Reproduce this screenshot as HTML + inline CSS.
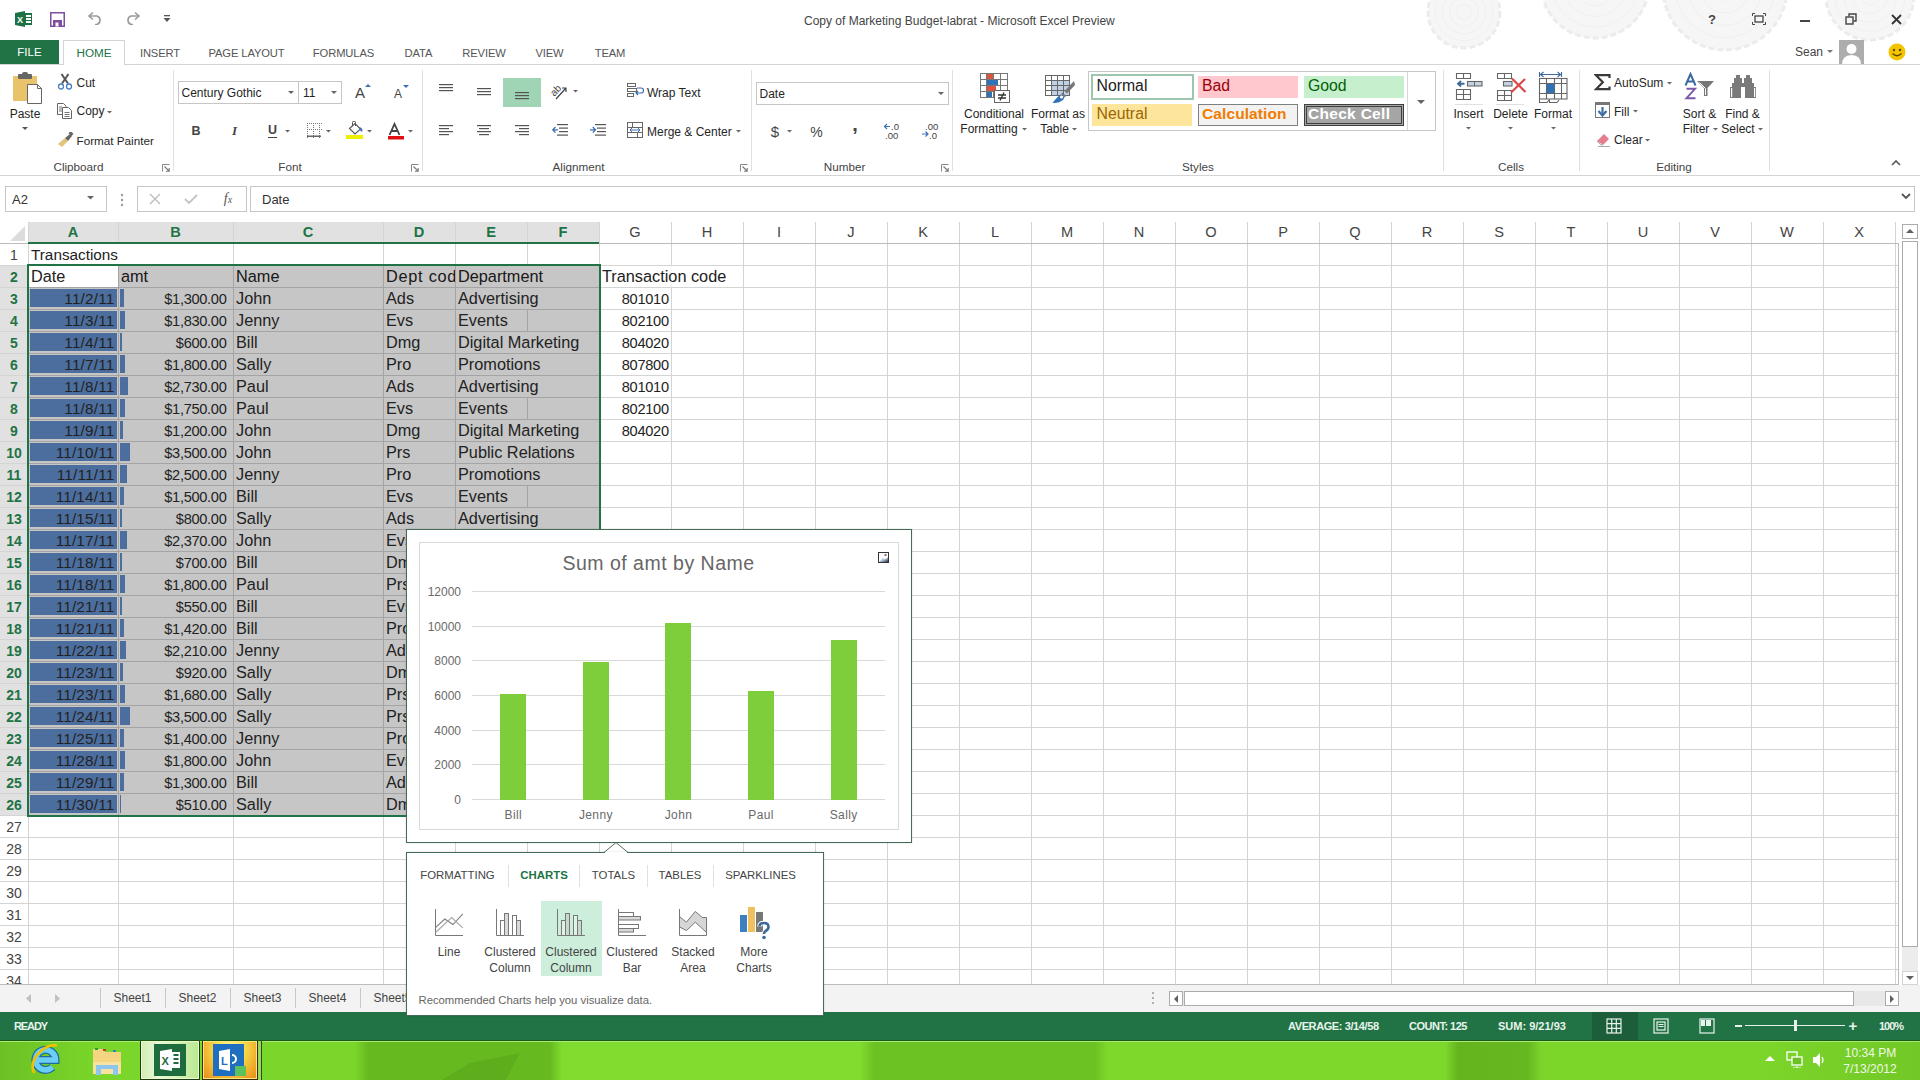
<!DOCTYPE html>
<html><head><meta charset="utf-8"><title>Excel</title>
<style>
html,body{margin:0;padding:0;}
body{width:1920px;height:1080px;overflow:hidden;position:relative;background:#fff;font-family:"Liberation Sans",sans-serif;}
body div, body svg{position:absolute;}
.t{white-space:nowrap;}
</style></head><body>
<svg style="left:1400px;top:0px;" width="520" height="64" viewBox="0 0 520 64"><circle cx="64" cy="12" r="36" fill="#f6f6f6" stroke="#ececec" stroke-width="3" stroke-dasharray="6 3"/><circle cx="64" cy="12" r="7.2" fill="none" stroke="#f0f0f0" stroke-width="1"/><circle cx="64" cy="12" r="14.4" fill="none" stroke="#f0f0f0" stroke-width="1"/><circle cx="64" cy="12" r="21.6" fill="none" stroke="#f0f0f0" stroke-width="1"/><circle cx="64" cy="12" r="28.8" fill="none" stroke="#f0f0f0" stroke-width="1"/><circle cx="195" cy="-16" r="54" fill="#f6f6f6" stroke="#ececec" stroke-width="3" stroke-dasharray="6 3"/><circle cx="195" cy="-16" r="10.8" fill="none" stroke="#f0f0f0" stroke-width="1"/><circle cx="195" cy="-16" r="21.6" fill="none" stroke="#f0f0f0" stroke-width="1"/><circle cx="195" cy="-16" r="32.4" fill="none" stroke="#f0f0f0" stroke-width="1"/><circle cx="195" cy="-16" r="43.2" fill="none" stroke="#f0f0f0" stroke-width="1"/><circle cx="325" cy="-12" r="62" fill="#f6f6f6" stroke="#ececec" stroke-width="3" stroke-dasharray="6 3"/><circle cx="325" cy="-12" r="12.4" fill="none" stroke="#f0f0f0" stroke-width="1"/><circle cx="325" cy="-12" r="24.8" fill="none" stroke="#f0f0f0" stroke-width="1"/><circle cx="325" cy="-12" r="37.2" fill="none" stroke="#f0f0f0" stroke-width="1"/><circle cx="325" cy="-12" r="49.6" fill="none" stroke="#f0f0f0" stroke-width="1"/><circle cx="470" cy="-4" r="44" fill="#f6f6f6" stroke="#ececec" stroke-width="3" stroke-dasharray="6 3"/><circle cx="470" cy="-4" r="8.8" fill="none" stroke="#f0f0f0" stroke-width="1"/><circle cx="470" cy="-4" r="17.6" fill="none" stroke="#f0f0f0" stroke-width="1"/><circle cx="470" cy="-4" r="26.4" fill="none" stroke="#f0f0f0" stroke-width="1"/><circle cx="470" cy="-4" r="35.2" fill="none" stroke="#f0f0f0" stroke-width="1"/></svg><svg style="left:14px;top:10px;" width="19" height="18" viewBox="0 0 19 18"><path d="M1 3 L11 1 L11 17 L1 15 Z" fill="#1e7145"/><rect x="10" y="3" width="8" height="12" fill="#1e7145"/><rect x="12" y="5" width="5" height="2" fill="#fff"/><rect x="12" y="8" width="5" height="2" fill="#fff"/><rect x="12" y="11" width="5" height="2" fill="#fff"/><text x="3" y="12.5" font-family="Liberation Sans" font-weight="700" font-size="9" fill="#fff">X</text></svg><svg style="left:50px;top:12px;" width="15" height="15" viewBox="0 0 15 15"><path d="M0.75 0.75 H14.25 V14.25 H0.75 Z" fill="none" stroke="#7d4f9e" stroke-width="1.5"/><rect x="3" y="8" width="9" height="7" fill="#7d4f9e"/><rect x="5.5" y="10.5" width="3" height="4" fill="#fff"/></svg><svg style="left:87px;top:11px;" width="16" height="14" viewBox="0 0 16 14"><path d="M3 5 H10 A4.5 4.5 0 0 1 10 13.5 H8" fill="none" stroke="#9a9a9a" stroke-width="1.6"/><path d="M6 1.5 L2 5 L6 8.5" fill="none" stroke="#9a9a9a" stroke-width="1.6"/></svg><svg style="left:125px;top:11px;" width="16" height="14" viewBox="0 0 16 14"><path d="M13 5 H6 A4.5 4.5 0 0 0 6 13.5 H8" fill="none" stroke="#9a9a9a" stroke-width="1.6"/><path d="M10 1.5 L14 5 L10 8.5" fill="none" stroke="#9a9a9a" stroke-width="1.6"/></svg><svg style="left:163px;top:15px;" width="9" height="8" viewBox="0 0 9 8"><rect x="1" y="0" width="6" height="1.3" fill="#555"/><path d="M0.5 3 L7.5 3 L4 7 Z" fill="#555"/></svg><div class="t" style="left:804px;top:14.84px;font-size:12px;line-height:12px;color:#444;font-weight:400;">Copy of Marketing Budget-labrat - Microsoft Excel Preview</div><div class="t" style="left:1702.0px;width:20px;top:13.0px;font-size:13px;line-height:13px;color:#444;font-weight:700;text-align:center;">?</div><svg style="left:1752px;top:13px;" width="14" height="12" viewBox="0 0 14 12"><rect x="3" y="3" width="8" height="6" fill="none" stroke="#444" stroke-width="1.3"/><path d="M0.5 3 V0.5 H3 M11 0.5 H13.5 V3 M13.5 9 V11.5 H11 M3 11.5 H0.5 V9" fill="none" stroke="#444" stroke-width="1"/></svg><div style="left:1800px;top:20px;width:10px;height:2px;background:#444"></div><svg style="left:1845px;top:13px;" width="12" height="12" viewBox="0 0 12 12"><rect x="1" y="4" width="7" height="7" fill="none" stroke="#444" stroke-width="1.4"/><path d="M4 3.5 V1 H11 V8 H8.5" fill="none" stroke="#444" stroke-width="1.4"/></svg><svg style="left:1891px;top:14px;" width="11" height="11" viewBox="0 0 11 11"><path d="M1 1 L10 10 M10 1 L1 10" stroke="#333" stroke-width="1.8"/></svg><div style="left:0px;top:40px;width:59px;height:25px;background:#217346"></div><div class="t" style="left:0.0px;width:59px;top:47.27px;font-size:11.5px;line-height:11.5px;color:#fff;font-weight:400;text-align:center;">FILE</div><div style="left:63px;top:40px;width:62px;height:25px;background:#fff;border:1px solid #d4d4d4;border-bottom:none;box-sizing:border-box"></div><div class="t" style="left:63.0px;width:62px;top:47.1px;font-size:11.7px;line-height:11.7px;color:#217346;font-weight:400;text-align:center;">HOME</div><div class="t" style="left:100.0px;width:120px;top:47.52px;font-size:11.2px;line-height:11.2px;color:#555;font-weight:400;text-align:center;letter-spacing:-0.1px">INSERT</div><div class="t" style="left:186.5px;width:120px;top:47.52px;font-size:11.2px;line-height:11.2px;color:#555;font-weight:400;text-align:center;letter-spacing:-0.1px">PAGE LAYOUT</div><div class="t" style="left:283.5px;width:120px;top:47.52px;font-size:11.2px;line-height:11.2px;color:#555;font-weight:400;text-align:center;letter-spacing:-0.1px">FORMULAS</div><div class="t" style="left:358.5px;width:120px;top:47.52px;font-size:11.2px;line-height:11.2px;color:#555;font-weight:400;text-align:center;letter-spacing:-0.1px">DATA</div><div class="t" style="left:424.0px;width:120px;top:47.52px;font-size:11.2px;line-height:11.2px;color:#555;font-weight:400;text-align:center;letter-spacing:-0.1px">REVIEW</div><div class="t" style="left:489.5px;width:120px;top:47.52px;font-size:11.2px;line-height:11.2px;color:#555;font-weight:400;text-align:center;letter-spacing:-0.1px">VIEW</div><div class="t" style="left:550.0px;width:120px;top:47.52px;font-size:11.2px;line-height:11.2px;color:#555;font-weight:400;text-align:center;letter-spacing:-0.1px">TEAM</div><div class="t" style="left:1795px;top:45.84px;font-size:12px;line-height:12px;color:#444;font-weight:400;">Sean</div><svg style="left:1827px;top:50px;" width="6" height="4" viewBox="0 0 6 4"><path d="M0 0 L6 0 L3 3 Z" fill="#777"/></svg><svg style="left:1839px;top:40px;" width="25" height="25" viewBox="0 0 25 25"><rect width="25" height="25" fill="#adadad"/><circle cx="12.5" cy="9" r="5" fill="#fff"/><path d="M3 25 Q3 15 12.5 15 Q22 15 22 25 Z" fill="#fff"/></svg><svg style="left:1888px;top:43px;" width="18" height="18" viewBox="0 0 18 18"><circle cx="9" cy="9" r="8.5" fill="#f5c400"/><circle cx="6" cy="7" r="1.2" fill="#5a4a00"/><circle cx="12" cy="7" r="1.2" fill="#5a4a00"/><path d="M4.5 10.5 Q9 15 13.5 10.5" fill="none" stroke="#5a4a00" stroke-width="1.3"/></svg><div style="left:0px;top:64px;width:63px;height:1px;background:#d4d4d4"></div><div style="left:125px;top:64px;width:1795px;height:1px;background:#d4d4d4"></div><div class="t" style="left:18.5px;width:120px;top:161.1px;font-size:11.7px;line-height:11.7px;color:#444;font-weight:400;text-align:center;">Clipboard</div><div class="t" style="left:230.0px;width:120px;top:161.1px;font-size:11.7px;line-height:11.7px;color:#444;font-weight:400;text-align:center;">Font</div><div class="t" style="left:518.5px;width:120px;top:161.1px;font-size:11.7px;line-height:11.7px;color:#444;font-weight:400;text-align:center;">Alignment</div><div class="t" style="left:784.5px;width:120px;top:161.1px;font-size:11.7px;line-height:11.7px;color:#444;font-weight:400;text-align:center;">Number</div><div class="t" style="left:1138.0px;width:120px;top:161.1px;font-size:11.7px;line-height:11.7px;color:#444;font-weight:400;text-align:center;">Styles</div><div class="t" style="left:1451.0px;width:120px;top:161.1px;font-size:11.7px;line-height:11.7px;color:#444;font-weight:400;text-align:center;">Cells</div><div class="t" style="left:1614.0px;width:120px;top:161.1px;font-size:11.7px;line-height:11.7px;color:#444;font-weight:400;text-align:center;">Editing</div><div style="left:173px;top:70px;width:1px;height:101px;background:#e1e1e1"></div><div style="left:422px;top:70px;width:1px;height:101px;background:#e1e1e1"></div><div style="left:751px;top:70px;width:1px;height:101px;background:#e1e1e1"></div><div style="left:952px;top:70px;width:1px;height:101px;background:#e1e1e1"></div><div style="left:1443px;top:70px;width:1px;height:101px;background:#e1e1e1"></div><div style="left:1579px;top:70px;width:1px;height:101px;background:#e1e1e1"></div><div style="left:1769px;top:70px;width:1px;height:101px;background:#e1e1e1"></div><svg style="left:162px;top:164px;" width="8" height="8" viewBox="0 0 8 8"><path d="M0.5 7.5 V0.5 H7.5" fill="none" stroke="#888" stroke-width="1"/><path d="M2.5 2.5 L7 7 M4 7.2 H7.2 V4" fill="none" stroke="#777" stroke-width="1.1"/></svg><svg style="left:411px;top:164px;" width="8" height="8" viewBox="0 0 8 8"><path d="M0.5 7.5 V0.5 H7.5" fill="none" stroke="#888" stroke-width="1"/><path d="M2.5 2.5 L7 7 M4 7.2 H7.2 V4" fill="none" stroke="#777" stroke-width="1.1"/></svg><svg style="left:740px;top:164px;" width="8" height="8" viewBox="0 0 8 8"><path d="M0.5 7.5 V0.5 H7.5" fill="none" stroke="#888" stroke-width="1"/><path d="M2.5 2.5 L7 7 M4 7.2 H7.2 V4" fill="none" stroke="#777" stroke-width="1.1"/></svg><svg style="left:941px;top:164px;" width="8" height="8" viewBox="0 0 8 8"><path d="M0.5 7.5 V0.5 H7.5" fill="none" stroke="#888" stroke-width="1"/><path d="M2.5 2.5 L7 7 M4 7.2 H7.2 V4" fill="none" stroke="#777" stroke-width="1.1"/></svg><div style="left:0px;top:175px;width:1920px;height:1px;background:#d5d5d5"></div><svg style="left:1891px;top:160px;" width="10" height="6" viewBox="0 0 10 6"><path d="M1 5 L5 1 L9 5" fill="none" stroke="#555" stroke-width="1.6"/></svg><svg style="left:12px;top:72px;" width="31" height="33" viewBox="0 0 31 33"><rect x="1" y="4" width="24" height="25" fill="#e8c36a"/><rect x="6" y="2" width="14" height="5" rx="1" fill="#666"/><rect x="10" y="0" width="6" height="4" rx="2" fill="#666"/><path d="M15.5 12.5 H25.5 L29.5 16.5 V31.5 H15.5 Z" fill="#fff" stroke="#666" stroke-width="1"/><path d="M25.5 12.5 V16.5 H29.5" fill="none" stroke="#666" stroke-width="1"/></svg><div class="t" style="left:-5.0px;width:60px;top:108.34px;font-size:12px;line-height:12px;color:#262626;font-weight:400;text-align:center;">Paste</div><svg style="left:21.5px;top:127px;" width="6" height="4" viewBox="0 0 6 4"><path d="M0 0 L6 0 L3 3 Z" fill="#555"/></svg><svg style="left:57px;top:73px;" width="16" height="17" viewBox="0 0 16 17"><path d="M4.5 1 L11 10.5 M11.5 1 L5 10.5" stroke="#555" stroke-width="2"/><circle cx="4" cy="13.5" r="2.5" fill="none" stroke="#4a7fbf" stroke-width="1.3"/><circle cx="12" cy="13.5" r="2.5" fill="none" stroke="#4a7fbf" stroke-width="1.3"/></svg><div class="t" style="left:76.5px;top:76.84px;font-size:12px;line-height:12px;color:#262626;font-weight:400;">Cut</div><svg style="left:57px;top:103px;" width="16" height="16" viewBox="0 0 16 16"><path d="M0.5 0.5 H6.5 L9 3 V11.5 H0.5 Z" fill="#fff" stroke="#666"/><path d="M5.5 4.5 H11.5 L14.5 7.5 V15.5 H5.5 Z" fill="#fff" stroke="#666"/><path d="M7.5 9.5 H12.5 M7.5 11.5 H12.5 M7.5 13.5 H12.5 M2 4 H5 M2 6 H5 M2 8 H5" stroke="#777" stroke-width="1"/></svg><div class="t" style="left:76.5px;top:105.34px;font-size:12px;line-height:12px;color:#262626;font-weight:400;">Copy</div><svg style="left:106.5px;top:111px;" width="5.0" height="3.5" viewBox="0 0 5.0 3.5"><path d="M0 0 L5.0 0 L2.5 2.5 Z" fill="#666"/></svg><svg style="left:56px;top:132px;" width="18" height="16" viewBox="0 0 18 16"><path d="M2 12 L9 6 L12 9 L6 15 Z" fill="#e3c27a"/><path d="M9 6 L14 2 L16 4 L12 9 Z" fill="#666"/><rect x="13" y="0" width="4" height="3" fill="#666" transform="rotate(40 15 1.5)"/></svg><div class="t" style="left:76.5px;top:134.6px;font-size:11.7px;line-height:11.7px;color:#262626;font-weight:400;">Format Painter</div><div style="left:178px;top:81px;width:121px;height:23px;border:1px solid #c6c6c6;box-sizing:border-box;background:#fff"></div><div style="left:298px;top:81px;width:44px;height:23px;border:1px solid #c6c6c6;box-sizing:border-box;background:#fff"></div><div class="t" style="left:181.5px;top:86.64px;font-size:12px;line-height:12px;color:#262626;font-weight:400;">Century Gothic</div><svg style="left:288px;top:91px;" width="6" height="4" viewBox="0 0 6 4"><path d="M0 0 L6 0 L3 3 Z" fill="#666"/></svg><div class="t" style="left:303px;top:86.64px;font-size:12px;line-height:12px;color:#262626;font-weight:400;">11</div><svg style="left:331px;top:91px;" width="6" height="4" viewBox="0 0 6 4"><path d="M0 0 L6 0 L3 3 Z" fill="#666"/></svg><svg style="left:354px;top:83px;" width="17" height="16" viewBox="0 0 17 16"><text x="1" y="15" font-family="Liberation Sans" font-size="15" fill="#444">A</text><path d="M11 4 L14 1 L17 4 Z" fill="#3d6fb5"/></svg><svg style="left:392px;top:84px;" width="17" height="15" viewBox="0 0 17 15"><text x="2" y="14" font-family="Liberation Sans" font-size="12" fill="#444">A</text><path d="M11 1 L14 4 L17 1 Z" fill="#3d6fb5"/></svg><div class="t" style="left:186.0px;width:20px;top:125.42px;font-size:12.5px;line-height:12.5px;color:#444;font-weight:700;text-align:center;">B</div><div class="t" style="left:224.5px;width:20px;top:123.5px;font-size:13px;line-height:13px;color:#444;font-weight:700;text-align:center;font-style:italic;font-family:Liberation Serif">I</div><div class="t" style="left:262.5px;width:20px;top:124.42px;font-size:12.5px;line-height:12.5px;color:#444;font-weight:700;text-align:center;">U</div><div style="left:268px;top:137px;width:9px;height:1px;background:#444"></div><svg style="left:284.5px;top:130px;" width="5.0" height="3.5" viewBox="0 0 5.0 3.5"><path d="M0 0 L5.0 0 L2.5 2.5 Z" fill="#666"/></svg><svg style="left:307px;top:123px;" width="15" height="15" viewBox="0 0 15 15"><rect x="0" y="0" width="1" height="1" fill="#777"/><rect x="0" y="6" width="1" height="1" fill="#777"/><rect x="0" y="0" width="1" height="1" fill="#777"/><rect x="6" y="0" width="1" height="1" fill="#777"/><rect x="12" y="0" width="1" height="1" fill="#777"/><rect x="2" y="0" width="1" height="1" fill="#777"/><rect x="2" y="6" width="1" height="1" fill="#777"/><rect x="0" y="2" width="1" height="1" fill="#777"/><rect x="6" y="2" width="1" height="1" fill="#777"/><rect x="12" y="2" width="1" height="1" fill="#777"/><rect x="4" y="0" width="1" height="1" fill="#777"/><rect x="4" y="6" width="1" height="1" fill="#777"/><rect x="0" y="4" width="1" height="1" fill="#777"/><rect x="6" y="4" width="1" height="1" fill="#777"/><rect x="12" y="4" width="1" height="1" fill="#777"/><rect x="6" y="0" width="1" height="1" fill="#777"/><rect x="6" y="6" width="1" height="1" fill="#777"/><rect x="0" y="6" width="1" height="1" fill="#777"/><rect x="6" y="6" width="1" height="1" fill="#777"/><rect x="12" y="6" width="1" height="1" fill="#777"/><rect x="8" y="0" width="1" height="1" fill="#777"/><rect x="8" y="6" width="1" height="1" fill="#777"/><rect x="0" y="8" width="1" height="1" fill="#777"/><rect x="6" y="8" width="1" height="1" fill="#777"/><rect x="12" y="8" width="1" height="1" fill="#777"/><rect x="10" y="0" width="1" height="1" fill="#777"/><rect x="10" y="6" width="1" height="1" fill="#777"/><rect x="0" y="10" width="1" height="1" fill="#777"/><rect x="6" y="10" width="1" height="1" fill="#777"/><rect x="12" y="10" width="1" height="1" fill="#777"/><rect x="12" y="0" width="1" height="1" fill="#777"/><rect x="12" y="6" width="1" height="1" fill="#777"/><rect x="0" y="12" width="1" height="1" fill="#777"/><rect x="6" y="12" width="1" height="1" fill="#777"/><rect x="12" y="12" width="1" height="1" fill="#777"/><rect x="14" y="0" width="1" height="1" fill="#777"/><rect x="14" y="6" width="1" height="1" fill="#777"/><rect x="0" y="14" width="1" height="1" fill="#777"/><rect x="6" y="14" width="1" height="1" fill="#777"/><rect x="12" y="14" width="1" height="1" fill="#777"/><rect x="0" y="12.5" width="14" height="1.5" fill="#666"/></svg><svg style="left:325.5px;top:130px;" width="5.0" height="3.5" viewBox="0 0 5.0 3.5"><path d="M0 0 L5.0 0 L2.5 2.5 Z" fill="#666"/></svg><svg style="left:345px;top:121px;" width="20" height="19" viewBox="0 0 20 19"><path d="M4.5 7.5 L10 2.5 L15.5 8 L10 13 Z" fill="#fff" stroke="#555" stroke-width="1.1"/><path d="M7.5 4.5 V1.5 A1.5 1.5 0 0 1 10.5 1.5 V5" fill="none" stroke="#555" stroke-width="1"/><path d="M14 6 Q17.5 6.5 17.5 10 Q16 11.5 15 9" fill="#3d6fb5"/><rect x="1" y="14" width="17" height="4" fill="#eef000"/></svg><svg style="left:366.5px;top:130px;" width="5.0" height="3.5" viewBox="0 0 5.0 3.5"><path d="M0 0 L5.0 0 L2.5 2.5 Z" fill="#666"/></svg><svg style="left:387px;top:122px;" width="18" height="18" viewBox="0 0 18 18"><path d="M2.5 13 L7.5 2 L12.5 13 M4.5 9 H10.5" fill="none" stroke="#444" stroke-width="1.8"/><rect x="1" y="14" width="16" height="3.5" fill="#e01010"/></svg><svg style="left:407.5px;top:130px;" width="5.0" height="3.5" viewBox="0 0 5.0 3.5"><path d="M0 0 L5.0 0 L2.5 2.5 Z" fill="#666"/></svg><svg style="left:439px;top:84px;" width="16" height="12" viewBox="0 0 16 12"><rect x="0" y="0" width="14" height="1.2" fill="#555"/><rect x="0" y="3" width="14" height="1.2" fill="#555"/><rect x="0" y="6" width="14" height="1.2" fill="#555"/></svg><svg style="left:477px;top:88px;" width="16" height="12" viewBox="0 0 16 12"><rect x="0" y="0" width="14" height="1.2" fill="#555"/><rect x="0" y="3" width="14" height="1.2" fill="#555"/><rect x="0" y="6" width="14" height="1.2" fill="#555"/></svg><div style="left:503px;top:78px;width:38px;height:29px;background:#9fd5b5"></div><svg style="left:515px;top:92px;" width="16" height="12" viewBox="0 0 16 12"><rect x="0" y="0" width="14" height="1.2" fill="#555"/><rect x="0" y="3" width="14" height="1.2" fill="#555"/><rect x="0" y="6" width="14" height="1.2" fill="#555"/></svg><svg style="left:551px;top:83px;" width="18" height="17" viewBox="0 0 18 17"><text x="0" y="10" font-family="Liberation Sans" font-size="10" fill="#444" transform="rotate(-45 6 8)">ab</text><path d="M5 16 L15 5 M11 5 H15 V9" fill="none" stroke="#444" stroke-width="1.2"/></svg><svg style="left:572.5px;top:90px;" width="5.0" height="3.5" viewBox="0 0 5.0 3.5"><path d="M0 0 L5.0 0 L2.5 2.5 Z" fill="#666"/></svg><svg style="left:439px;top:125px;" width="16" height="12" viewBox="0 0 16 12"><rect x="0" y="0" width="14" height="1.2" fill="#555"/><rect x="0" y="3" width="10" height="1.2" fill="#555"/><rect x="0" y="6" width="14" height="1.2" fill="#555"/><rect x="0" y="9" width="10" height="1.2" fill="#555"/></svg><svg style="left:477px;top:125px;" width="16" height="12" viewBox="0 0 16 12"><rect x="0" y="0" width="14" height="1.2" fill="#555"/><rect x="2" y="3" width="10" height="1.2" fill="#555"/><rect x="0" y="6" width="14" height="1.2" fill="#555"/><rect x="2" y="9" width="10" height="1.2" fill="#555"/></svg><svg style="left:515px;top:125px;" width="16" height="12" viewBox="0 0 16 12"><rect x="0" y="0" width="14" height="1.2" fill="#555"/><rect x="4" y="3" width="10" height="1.2" fill="#555"/><rect x="0" y="6" width="14" height="1.2" fill="#555"/><rect x="4" y="9" width="10" height="1.2" fill="#555"/></svg><svg style="left:552px;top:124px;" width="16" height="12" viewBox="0 0 16 12"><rect x="5" y="0" width="11" height="1.2" fill="#555"/><rect x="7" y="3.5" width="9" height="1.2" fill="#555"/><rect x="7" y="7" width="9" height="1.2" fill="#555"/><rect x="5" y="10.5" width="11" height="1.2" fill="#555"/><path d="M6 5.8 H0.8 M3.5 3 L0.8 5.8 L3.5 8.6" fill="none" stroke="#3d6fb5" stroke-width="1.3"/></svg><svg style="left:590px;top:124px;" width="16" height="12" viewBox="0 0 16 12"><rect x="5" y="0" width="11" height="1.2" fill="#555"/><rect x="7" y="3.5" width="9" height="1.2" fill="#555"/><rect x="7" y="7" width="9" height="1.2" fill="#555"/><rect x="5" y="10.5" width="11" height="1.2" fill="#555"/><path d="M0 5.8 H5.5 M2.8 3 L5.5 5.8 L2.8 8.6" fill="none" stroke="#3d6fb5" stroke-width="1.3"/></svg><svg style="left:627px;top:83px;" width="18" height="17" viewBox="0 0 18 17"><rect x="0.5" y="0.5" width="8" height="3" fill="none" stroke="#666"/><rect x="0.5" y="5.5" width="9" height="3" fill="none" stroke="#666"/><rect x="0.5" y="10.5" width="6" height="3" fill="none" stroke="#666"/><path d="M10 5 H14 A2.5 2.5 0 0 1 14 10 H9 M11 8 L9 10 L11 12" fill="none" stroke="#3d6fb5" stroke-width="1.2"/></svg><div class="t" style="left:647px;top:86.84px;font-size:12px;line-height:12px;color:#262626;font-weight:400;">Wrap Text</div><svg style="left:627px;top:122px;" width="17" height="17" viewBox="0 0 17 17"><rect x="0.5" y="0.5" width="15" height="15" fill="none" stroke="#666"/><path d="M0.5 5.5 H15.5 M0.5 10.5 H15.5 M5.5 0.5 V5.5 M10.5 10.5 V15.5" stroke="#666"/><path d="M3 8 H13 M5 6 L3 8 L5 10 M11 6 L13 8 L11 10" fill="none" stroke="#3d6fb5" stroke-width="1"/></svg><div class="t" style="left:647px;top:125.84px;font-size:12px;line-height:12px;color:#262626;font-weight:400;">Merge &amp; Center</div><svg style="left:735.5px;top:130px;" width="5.0" height="3.5" viewBox="0 0 5.0 3.5"><path d="M0 0 L5.0 0 L2.5 2.5 Z" fill="#666"/></svg><div style="left:756px;top:82px;width:193px;height:23px;border:1px solid #c6c6c6;box-sizing:border-box;background:#fff"></div><div class="t" style="left:759.5px;top:87.84px;font-size:12px;line-height:12px;color:#262626;font-weight:400;">Date</div><svg style="left:938px;top:92px;" width="6" height="4" viewBox="0 0 6 4"><path d="M0 0 L6 0 L3 3 Z" fill="#666"/></svg><div class="t" style="left:765.0px;width:20px;top:124.3px;font-size:15px;line-height:15px;color:#444;font-weight:400;text-align:center;">$</div><svg style="left:786.5px;top:130px;" width="5.0" height="3.5" viewBox="0 0 5.0 3.5"><path d="M0 0 L5.0 0 L2.5 2.5 Z" fill="#666"/></svg><div class="t" style="left:806.5px;width:20px;top:125.15px;font-size:14px;line-height:14px;color:#444;font-weight:400;text-align:center;">%</div><div class="t" style="left:845.0px;width:20px;top:114.07px;font-size:20px;line-height:20px;color:#444;font-weight:700;text-align:center;">,</div><svg style="left:883px;top:122px;" width="18" height="17" viewBox="0 0 18 17"><path d="M7 4.5 H1.5 M4 2 L1.5 4.5 L4 7" fill="none" stroke="#3d6fb5" stroke-width="1.2"/><text x="8" y="8" font-family="Liberation Sans" font-size="9.5" fill="#444">.0</text><text x="2" y="16.5" font-family="Liberation Sans" font-size="9.5" fill="#444">.00</text></svg><svg style="left:921px;top:122px;" width="18" height="17" viewBox="0 0 18 17"><text x="4" y="8" font-family="Liberation Sans" font-size="9.5" fill="#444">.00</text><path d="M1 12 H7 M4.5 9.5 L7 12 L4.5 14.5" fill="none" stroke="#3d6fb5" stroke-width="1.2"/><text x="8" y="16.5" font-family="Liberation Sans" font-size="9.5" fill="#444">.0</text></svg><svg style="left:980px;top:73px;" width="32" height="31" viewBox="0 0 32 31"><g fill="none" stroke="#777" stroke-width="1"><rect x="0.5" y="0.5" width="27" height="24"/><path d="M0.5 6.5 H27.5 M0.5 12.5 H27.5 M0.5 18.5 H27.5 M6.5 0.5 V24.5 M13.5 0.5 V24.5 M20.5 0.5 V24.5"/></g><rect x="7" y="1" width="6" height="5" fill="#d9553f"/><rect x="7" y="7" width="11" height="5" fill="#2f72b8"/><rect x="7" y="13" width="9" height="5" fill="#e0503c"/><rect x="7" y="19" width="5" height="5" fill="#2f72b8"/><rect x="14.5" y="17.5" width="15" height="12" fill="#fff" stroke="#666"/><path d="M18 22 H26 M18 25 H26 M24 19.5 L20 27.5" fill="none" stroke="#333" stroke-width="1.3"/></svg><div class="t" style="left:954.0px;width:80px;top:107.84px;font-size:12px;line-height:12px;color:#262626;font-weight:400;text-align:center;">Conditional</div><div class="t" style="left:949.0px;width:80px;top:123.34px;font-size:12px;line-height:12px;color:#262626;font-weight:400;text-align:center;">Formatting</div><svg style="left:1021.5px;top:128px;" width="5.0" height="3.5" viewBox="0 0 5.0 3.5"><path d="M0 0 L5.0 0 L2.5 2.5 Z" fill="#666"/></svg><svg style="left:1044px;top:74px;" width="32" height="30" viewBox="0 0 32 30"><rect x="7" y="6" width="18" height="15" fill="#c0d0e6"/><g fill="none" stroke="#666" stroke-width="1"><rect x="1.5" y="1.5" width="24" height="20"/><path d="M1.5 6.5 H25.5 M1.5 11.5 H25.5 M1.5 16.5 H25.5 M7.5 1.5 V21.5 M13.5 1.5 V21.5 M19.5 1.5 V21.5"/></g><path d="M30 7 L31 11 L23 19.5 L20.5 17 Z" fill="#777"/><path d="M18.5 18.5 L22 22 L20.5 23.5 L17 20 Z" fill="#777"/><path d="M16.5 20.5 Q21.5 22 19.5 25.5 Q15 29.5 8.5 29 Q13 23 16.5 20.5 Z" fill="#2f72b8"/><circle cx="17.5" cy="23" r="1.6" fill="#fff"/></svg><div class="t" style="left:1018.0px;width:80px;top:107.84px;font-size:12px;line-height:12px;color:#262626;font-weight:400;text-align:center;">Format as</div><div class="t" style="left:1024.5px;width:60px;top:123.34px;font-size:12px;line-height:12px;color:#262626;font-weight:400;text-align:center;">Table</div><svg style="left:1071.5px;top:128px;" width="5.0" height="3.5" viewBox="0 0 5.0 3.5"><path d="M0 0 L5.0 0 L2.5 2.5 Z" fill="#666"/></svg><div style="left:1088px;top:71px;width:348px;height:60px;border:1px solid #c6c6c6;box-sizing:border-box;background:#fff"></div><div style="left:1407px;top:72px;width:1px;height:58px;background:#d6d6d6"></div><svg style="left:1417px;top:100px;" width="8" height="5" viewBox="0 0 8 5"><path d="M0 0 L8 0 L4 4 Z" fill="#666"/></svg><div style="left:1091px;top:74px;width:103px;height:26px;border:2px solid #9ec6ae;box-sizing:border-box;background:#fff"></div><div class="t" style="left:1096.5px;top:78.13px;font-size:15.8px;line-height:15.8px;color:#222;font-weight:400;">Normal</div><div style="left:1092px;top:104px;width:100px;height:22px;background:#fde59b"></div><div class="t" style="left:1096.5px;top:106.13px;font-size:15.8px;line-height:15.8px;color:#9c6500;font-weight:400;">Neutral</div><div style="left:1198px;top:76px;width:100px;height:22px;background:#ffc7ce"></div><div class="t" style="left:1202px;top:78.13px;font-size:15.8px;line-height:15.8px;color:#9c0006;font-weight:400;">Bad</div><div style="left:1304px;top:76px;width:100px;height:22px;background:#c6efce"></div><div class="t" style="left:1308px;top:78.13px;font-size:15.8px;line-height:15.8px;color:#006100;font-weight:400;">Good</div><div style="left:1198px;top:104px;width:100px;height:22px;background:#f2f2f2;border:1px solid #7f7f7f;box-sizing:border-box"></div><div class="t" style="left:1202px;top:106.18px;font-size:15.5px;line-height:15.5px;color:#f07d00;font-weight:700;letter-spacing:0.1px">Calculation</div><div style="left:1304px;top:104px;width:100px;height:22px;background:#a5a5a5;border:3px double #3f3f3f;box-sizing:border-box"></div><div class="t" style="left:1308px;top:106.18px;font-size:15.5px;line-height:15.5px;color:#fff;font-weight:700;letter-spacing:0.3px">Check Cell</div><svg style="left:1455px;top:72px;" width="30" height="34" viewBox="0 0 30 34"><g fill="none" stroke="#666" stroke-width="1.1"><path d="M1.5 1.5 H15.5 V6.5 H1.5 Z M8.5 1.5 V6.5"/><path d="M1.5 17.5 H15.5 V27.5 H1.5 Z M8.5 17.5 V27.5 M1.5 22.5 H15.5"/></g><rect x="12.5" y="9.5" width="14.5" height="4.5" fill="#c5d3e2" stroke="#666" stroke-width="1.1"/><path d="M19.5 9.5 V14" stroke="#666"/><path d="M9.5 11.75 H3.5 M6 9 L3 11.75 L6 14.5" fill="none" stroke="#3d6a9a" stroke-width="1.8"/><rect x="0" y="32" width="28" height="1" fill="#e0e0e0"/></svg><div class="t" style="left:1438.5px;width:60px;top:107.84px;font-size:12px;line-height:12px;color:#262626;font-weight:400;text-align:center;">Insert</div><svg style="left:1465.5px;top:127px;" width="5.0" height="3.5" viewBox="0 0 5.0 3.5"><path d="M0 0 L5.0 0 L2.5 2.5 Z" fill="#666"/></svg><svg style="left:1496px;top:72px;" width="31" height="34" viewBox="0 0 31 34"><g fill="none" stroke="#666" stroke-width="1.1"><path d="M1.5 1.5 H15.5 V6.5 H1.5 Z M8.5 1.5 V6.5"/><path d="M1.5 18.5 H15.5 V28.5 H1.5 Z M8.5 18.5 V28.5 M1.5 23.5 H15.5"/></g><rect x="7.5" y="9.5" width="8.5" height="4.5" fill="#c5d3e2" stroke="#666" stroke-width="1.1"/><path d="M16 6.5 L29.5 20 M29 7 L15 20.5" stroke="#d9494a" stroke-width="2.2"/><rect x="0" y="32" width="28" height="1" fill="#e0e0e0"/></svg><div class="t" style="left:1480.5px;width:60px;top:107.84px;font-size:12px;line-height:12px;color:#262626;font-weight:400;text-align:center;">Delete</div><svg style="left:1507.5px;top:127px;" width="5.0" height="3.5" viewBox="0 0 5.0 3.5"><path d="M0 0 L5.0 0 L2.5 2.5 Z" fill="#666"/></svg><svg style="left:1538px;top:71px;" width="31" height="33" viewBox="0 0 31 33"><path d="M1.5 1 V6 M23.5 1 V6 M2 3.5 H23 M5.5 1 L2.5 3.5 L5.5 6 M19.5 1 L22.5 3.5 L19.5 6" fill="none" stroke="#3d6a9a" stroke-width="1.1"/><g fill="none" stroke="#666" stroke-width="1.1"><rect x="1.5" y="7.5" width="27.5" height="20.5"/><path d="M1.5 12.5 H29 M1.5 22.5 H29 M8.5 7.5 V28 M16.5 7.5 V28 M23.5 7.5 V28"/><path d="M1.5 28 V31.5 H9 L11 29 M11.5 28.5 V31.5 H19 L21 29"/></g><rect x="9" y="13" width="7" height="9" fill="#2f72b8"/></svg><div class="t" style="left:1523.0px;width:60px;top:107.84px;font-size:12px;line-height:12px;color:#262626;font-weight:400;text-align:center;">Format</div><svg style="left:1550.5px;top:127px;" width="5.0" height="3.5" viewBox="0 0 5.0 3.5"><path d="M0 0 L5.0 0 L2.5 2.5 Z" fill="#666"/></svg><svg style="left:1594px;top:74px;" width="17" height="17" viewBox="0 0 17 17"><path d="M15.5 4 V1.2 H2 L8.8 8.2 L2 15.2 H15.5 V12.5" fill="none" stroke="#3a3a3a" stroke-width="2.2" stroke-linejoin="miter"/></svg><div class="t" style="left:1614px;top:76.84px;font-size:12px;line-height:12px;color:#262626;font-weight:400;">AutoSum</div><svg style="left:1666.5px;top:82px;" width="5.0" height="3.5" viewBox="0 0 5.0 3.5"><path d="M0 0 L5.0 0 L2.5 2.5 Z" fill="#666"/></svg><svg style="left:1595px;top:102px;" width="16" height="17" viewBox="0 0 16 17"><rect x="0.5" y="0.5" width="14" height="15" fill="#fff" stroke="#777"/><rect x="0" y="0" width="15" height="3" fill="#777"/><path d="M7.5 5 V13" stroke="#3d6fa5" stroke-width="2.2"/><path d="M3.5 9 L7.5 13.5 L11.5 9" fill="none" stroke="#3d6fa5" stroke-width="2.2"/></svg><div class="t" style="left:1614px;top:105.84px;font-size:12px;line-height:12px;color:#262626;font-weight:400;">Fill</div><svg style="left:1632.5px;top:110px;" width="5.0" height="3.5" viewBox="0 0 5.0 3.5"><path d="M0 0 L5.0 0 L2.5 2.5 Z" fill="#666"/></svg><svg style="left:1596px;top:132px;" width="16" height="15" viewBox="0 0 16 15"><path d="M1 9 L8 2 L13 7 L7 13 Z" fill="#e57f8f"/><path d="M1 9 L5 13 L7 13" fill="none" stroke="#aaa"/><path d="M2 14.5 H14" stroke="#aaa"/></svg><div class="t" style="left:1614px;top:134.34px;font-size:12px;line-height:12px;color:#262626;font-weight:400;">Clear</div><svg style="left:1644.5px;top:139px;" width="5.0" height="3.5" viewBox="0 0 5.0 3.5"><path d="M0 0 L5.0 0 L2.5 2.5 Z" fill="#666"/></svg><svg style="left:1683px;top:72px;" width="34" height="30" viewBox="0 0 34 30"><path d="M2.5 13.5 L7.5 2 L12.5 13.5 M4.2 9.5 H10.8" fill="none" stroke="#3a6aa0" stroke-width="2"/><path d="M3.5 16.8 H12 L3.5 26.2 H12.5" fill="none" stroke="#7a5aa8" stroke-width="2"/><path d="M14 9 H31 L24.5 16 V24 H21 V16 Z" fill="#777"/><path d="M16.5 10.5 L22.5 16.5 V23" fill="none" stroke="#fff" stroke-width="1"/></svg><div class="t" style="left:1669.5px;width:60px;top:107.84px;font-size:12px;line-height:12px;color:#262626;font-weight:400;text-align:center;">Sort &amp;</div><div class="t" style="left:1666.0px;width:60px;top:123.34px;font-size:12px;line-height:12px;color:#262626;font-weight:400;text-align:center;">Filter</div><svg style="left:1712.5px;top:128px;" width="5.0" height="3.5" viewBox="0 0 5.0 3.5"><path d="M0 0 L5.0 0 L2.5 2.5 Z" fill="#666"/></svg><svg style="left:1729px;top:74px;" width="28" height="25" viewBox="0 0 28 25"><g fill="#7a7a7a"><path d="M7 1 H11 V4 H13 V9 H15 V13 H12 V24 H1 V13 H3 V9 H5 V4 H7 Z"/><path d="M17 1 H21 V4 H23 V9 H25 V13 H27 V24 H16 V13 H13 V9 H15 V4 H17 Z"/></g><rect x="2" y="14" width="1.2" height="9" fill="#fff"/><rect x="25" y="14" width="1.2" height="9" fill="#fff"/><rect x="12" y="13" width="4" height="11" fill="#fff"/></svg><div class="t" style="left:1712.5px;width:60px;top:107.84px;font-size:12px;line-height:12px;color:#262626;font-weight:400;text-align:center;">Find &amp;</div><div class="t" style="left:1708.0px;width:60px;top:123.34px;font-size:12px;line-height:12px;color:#262626;font-weight:400;text-align:center;">Select</div><svg style="left:1757.5px;top:128px;" width="5.0" height="3.5" viewBox="0 0 5.0 3.5"><path d="M0 0 L5.0 0 L2.5 2.5 Z" fill="#666"/></svg><div style="left:5px;top:186px;width:102px;height:26px;border:1px solid #c6c6c6;box-sizing:border-box;background:#fff"></div><div class="t" style="left:12px;top:193.0px;font-size:13px;line-height:13px;color:#333;font-weight:400;">A2</div><svg style="left:86.5px;top:196px;" width="7.0" height="4.5" viewBox="0 0 7.0 4.5"><path d="M0 0 L7.0 0 L3.5 3.5 Z" fill="#666"/></svg><svg style="left:120px;top:193px;" width="4" height="14" viewBox="0 0 4 14"><circle cx="2" cy="2" r="1.2" fill="#999"/><circle cx="2" cy="7" r="1.2" fill="#999"/><circle cx="2" cy="12" r="1.2" fill="#999"/></svg><div style="left:137px;top:186px;width:110px;height:26px;border:1px solid #c6c6c6;box-sizing:border-box;background:#fff"></div><svg style="left:149px;top:193px;" width="12" height="12" viewBox="0 0 12 12"><path d="M1 1 L11 11 M11 1 L1 11" stroke="#bdbdbd" stroke-width="1.4"/></svg><svg style="left:184px;top:193px;" width="14" height="12" viewBox="0 0 14 12"><path d="M1 6 L5 10 L13 2" fill="none" stroke="#c4c4c4" stroke-width="1.8"/></svg><div class="t" style="left:213.0px;width:30px;top:192.15px;font-size:14px;line-height:14px;color:#555;font-weight:400;text-align:center;font-style:italic;font-family:Liberation Serif">f<span style="font-size:10px">x</span></div><div style="left:250px;top:186px;width:1665px;height:26px;border:1px solid #c6c6c6;box-sizing:border-box;background:#fff"></div><div class="t" style="left:262px;top:193.0px;font-size:13px;line-height:13px;color:#333;font-weight:400;">Date</div><svg style="left:1901px;top:193px;" width="10" height="7" viewBox="0 0 10 7"><path d="M1 1 L5 5 L9 1" fill="none" stroke="#555" stroke-width="1.8"/></svg><svg style="left:10px;top:226px;" width="15" height="15" viewBox="0 0 15 15"><path d="M15 0 L15 15 L0 15 Z" fill="#dcdcdc"/></svg><div style="left:28px;top:222px;width:571px;height:21px;background:#e1e1e1"></div><div style="left:0px;top:265px;width:28px;height:550px;background:#e1e1e1"></div><div style="left:0px;top:243px;width:1898px;height:1px;background:#d4d4d4"></div><div style="left:0px;top:265px;width:1898px;height:1px;background:#d4d4d4"></div><div style="left:0px;top:287px;width:1898px;height:1px;background:#d4d4d4"></div><div style="left:0px;top:309px;width:1898px;height:1px;background:#d4d4d4"></div><div style="left:0px;top:331px;width:1898px;height:1px;background:#d4d4d4"></div><div style="left:0px;top:353px;width:1898px;height:1px;background:#d4d4d4"></div><div style="left:0px;top:375px;width:1898px;height:1px;background:#d4d4d4"></div><div style="left:0px;top:397px;width:1898px;height:1px;background:#d4d4d4"></div><div style="left:0px;top:419px;width:1898px;height:1px;background:#d4d4d4"></div><div style="left:0px;top:441px;width:1898px;height:1px;background:#d4d4d4"></div><div style="left:0px;top:463px;width:1898px;height:1px;background:#d4d4d4"></div><div style="left:0px;top:485px;width:1898px;height:1px;background:#d4d4d4"></div><div style="left:0px;top:507px;width:1898px;height:1px;background:#d4d4d4"></div><div style="left:0px;top:529px;width:1898px;height:1px;background:#d4d4d4"></div><div style="left:0px;top:551px;width:1898px;height:1px;background:#d4d4d4"></div><div style="left:0px;top:573px;width:1898px;height:1px;background:#d4d4d4"></div><div style="left:0px;top:595px;width:1898px;height:1px;background:#d4d4d4"></div><div style="left:0px;top:617px;width:1898px;height:1px;background:#d4d4d4"></div><div style="left:0px;top:639px;width:1898px;height:1px;background:#d4d4d4"></div><div style="left:0px;top:661px;width:1898px;height:1px;background:#d4d4d4"></div><div style="left:0px;top:683px;width:1898px;height:1px;background:#d4d4d4"></div><div style="left:0px;top:705px;width:1898px;height:1px;background:#d4d4d4"></div><div style="left:0px;top:727px;width:1898px;height:1px;background:#d4d4d4"></div><div style="left:0px;top:749px;width:1898px;height:1px;background:#d4d4d4"></div><div style="left:0px;top:771px;width:1898px;height:1px;background:#d4d4d4"></div><div style="left:0px;top:793px;width:1898px;height:1px;background:#d4d4d4"></div><div style="left:0px;top:815px;width:1898px;height:1px;background:#d4d4d4"></div><div style="left:0px;top:837px;width:1898px;height:1px;background:#d4d4d4"></div><div style="left:0px;top:859px;width:1898px;height:1px;background:#d4d4d4"></div><div style="left:0px;top:881px;width:1898px;height:1px;background:#d4d4d4"></div><div style="left:0px;top:903px;width:1898px;height:1px;background:#d4d4d4"></div><div style="left:0px;top:925px;width:1898px;height:1px;background:#d4d4d4"></div><div style="left:0px;top:947px;width:1898px;height:1px;background:#d4d4d4"></div><div style="left:0px;top:969px;width:1898px;height:1px;background:#d4d4d4"></div><div style="left:0px;top:991px;width:1898px;height:1px;background:#d4d4d4"></div><div style="left:118px;top:222px;width:1px;height:763px;background:#d4d4d4"></div><div style="left:233px;top:222px;width:1px;height:763px;background:#d4d4d4"></div><div style="left:383px;top:222px;width:1px;height:763px;background:#d4d4d4"></div><div style="left:455px;top:222px;width:1px;height:763px;background:#d4d4d4"></div><div style="left:527px;top:222px;width:1px;height:763px;background:#d4d4d4"></div><div style="left:599px;top:222px;width:1px;height:763px;background:#d4d4d4"></div><div style="left:671px;top:222px;width:1px;height:763px;background:#d4d4d4"></div><div style="left:743px;top:222px;width:1px;height:763px;background:#d4d4d4"></div><div style="left:815px;top:222px;width:1px;height:763px;background:#d4d4d4"></div><div style="left:887px;top:222px;width:1px;height:763px;background:#d4d4d4"></div><div style="left:959px;top:222px;width:1px;height:763px;background:#d4d4d4"></div><div style="left:1031px;top:222px;width:1px;height:763px;background:#d4d4d4"></div><div style="left:1103px;top:222px;width:1px;height:763px;background:#d4d4d4"></div><div style="left:1175px;top:222px;width:1px;height:763px;background:#d4d4d4"></div><div style="left:1247px;top:222px;width:1px;height:763px;background:#d4d4d4"></div><div style="left:1319px;top:222px;width:1px;height:763px;background:#d4d4d4"></div><div style="left:1391px;top:222px;width:1px;height:763px;background:#d4d4d4"></div><div style="left:1463px;top:222px;width:1px;height:763px;background:#d4d4d4"></div><div style="left:1535px;top:222px;width:1px;height:763px;background:#d4d4d4"></div><div style="left:1607px;top:222px;width:1px;height:763px;background:#d4d4d4"></div><div style="left:1679px;top:222px;width:1px;height:763px;background:#d4d4d4"></div><div style="left:1751px;top:222px;width:1px;height:763px;background:#d4d4d4"></div><div style="left:1823px;top:222px;width:1px;height:763px;background:#d4d4d4"></div><div style="left:1895px;top:222px;width:1px;height:763px;background:#d4d4d4"></div><div style="left:28px;top:222px;width:1px;height:763px;background:#d4d4d4"></div><div style="left:118px;top:244px;width:1px;height:21px;background:#fff"></div><div style="left:527px;top:266px;width:1px;height:21px;background:#fff"></div><div style="left:527px;top:288px;width:1px;height:21px;background:#fff"></div><div style="left:527px;top:332px;width:1px;height:21px;background:#fff"></div><div style="left:527px;top:354px;width:1px;height:21px;background:#fff"></div><div style="left:527px;top:376px;width:1px;height:21px;background:#fff"></div><div style="left:527px;top:420px;width:1px;height:21px;background:#fff"></div><div style="left:527px;top:442px;width:1px;height:21px;background:#fff"></div><div style="left:527px;top:464px;width:1px;height:21px;background:#fff"></div><div style="left:527px;top:508px;width:1px;height:21px;background:#fff"></div><div style="left:527px;top:552px;width:1px;height:21px;background:#fff"></div><div style="left:527px;top:574px;width:1px;height:21px;background:#fff"></div><div style="left:527px;top:618px;width:1px;height:21px;background:#fff"></div><div style="left:527px;top:640px;width:1px;height:21px;background:#fff"></div><div style="left:527px;top:662px;width:1px;height:21px;background:#fff"></div><div style="left:527px;top:684px;width:1px;height:21px;background:#fff"></div><div style="left:527px;top:706px;width:1px;height:21px;background:#fff"></div><div style="left:527px;top:728px;width:1px;height:21px;background:#fff"></div><div style="left:527px;top:772px;width:1px;height:21px;background:#fff"></div><div style="left:527px;top:794px;width:1px;height:21px;background:#fff"></div><div style="left:671px;top:266px;width:1px;height:21px;background:#fff"></div><div style="left:0px;top:243px;width:1898px;height:1px;background:#bcbcbc"></div><div class="t" style="left:43.0px;width:60px;top:224.94px;font-size:14.6px;line-height:14.6px;color:#217346;font-weight:700;text-align:center;">A</div><div class="t" style="left:145.5px;width:60px;top:224.94px;font-size:14.6px;line-height:14.6px;color:#217346;font-weight:700;text-align:center;">B</div><div class="t" style="left:278.0px;width:60px;top:224.94px;font-size:14.6px;line-height:14.6px;color:#217346;font-weight:700;text-align:center;">C</div><div class="t" style="left:389.0px;width:60px;top:224.94px;font-size:14.6px;line-height:14.6px;color:#217346;font-weight:700;text-align:center;">D</div><div class="t" style="left:461.0px;width:60px;top:224.94px;font-size:14.6px;line-height:14.6px;color:#217346;font-weight:700;text-align:center;">E</div><div class="t" style="left:533.0px;width:60px;top:224.94px;font-size:14.6px;line-height:14.6px;color:#217346;font-weight:700;text-align:center;">F</div><div class="t" style="left:605.0px;width:60px;top:224.94px;font-size:14.6px;line-height:14.6px;color:#444;font-weight:400;text-align:center;">G</div><div class="t" style="left:677.0px;width:60px;top:224.94px;font-size:14.6px;line-height:14.6px;color:#444;font-weight:400;text-align:center;">H</div><div class="t" style="left:749.0px;width:60px;top:224.94px;font-size:14.6px;line-height:14.6px;color:#444;font-weight:400;text-align:center;">I</div><div class="t" style="left:821.0px;width:60px;top:224.94px;font-size:14.6px;line-height:14.6px;color:#444;font-weight:400;text-align:center;">J</div><div class="t" style="left:893.0px;width:60px;top:224.94px;font-size:14.6px;line-height:14.6px;color:#444;font-weight:400;text-align:center;">K</div><div class="t" style="left:965.0px;width:60px;top:224.94px;font-size:14.6px;line-height:14.6px;color:#444;font-weight:400;text-align:center;">L</div><div class="t" style="left:1037.0px;width:60px;top:224.94px;font-size:14.6px;line-height:14.6px;color:#444;font-weight:400;text-align:center;">M</div><div class="t" style="left:1109.0px;width:60px;top:224.94px;font-size:14.6px;line-height:14.6px;color:#444;font-weight:400;text-align:center;">N</div><div class="t" style="left:1181.0px;width:60px;top:224.94px;font-size:14.6px;line-height:14.6px;color:#444;font-weight:400;text-align:center;">O</div><div class="t" style="left:1253.0px;width:60px;top:224.94px;font-size:14.6px;line-height:14.6px;color:#444;font-weight:400;text-align:center;">P</div><div class="t" style="left:1325.0px;width:60px;top:224.94px;font-size:14.6px;line-height:14.6px;color:#444;font-weight:400;text-align:center;">Q</div><div class="t" style="left:1397.0px;width:60px;top:224.94px;font-size:14.6px;line-height:14.6px;color:#444;font-weight:400;text-align:center;">R</div><div class="t" style="left:1469.0px;width:60px;top:224.94px;font-size:14.6px;line-height:14.6px;color:#444;font-weight:400;text-align:center;">S</div><div class="t" style="left:1541.0px;width:60px;top:224.94px;font-size:14.6px;line-height:14.6px;color:#444;font-weight:400;text-align:center;">T</div><div class="t" style="left:1613.0px;width:60px;top:224.94px;font-size:14.6px;line-height:14.6px;color:#444;font-weight:400;text-align:center;">U</div><div class="t" style="left:1685.0px;width:60px;top:224.94px;font-size:14.6px;line-height:14.6px;color:#444;font-weight:400;text-align:center;">V</div><div class="t" style="left:1757.0px;width:60px;top:224.94px;font-size:14.6px;line-height:14.6px;color:#444;font-weight:400;text-align:center;">W</div><div class="t" style="left:1829.0px;width:60px;top:224.94px;font-size:14.6px;line-height:14.6px;color:#444;font-weight:400;text-align:center;">X</div><div class="t" style="left:0.0px;width:28px;top:248.15px;font-size:14px;line-height:14px;color:#444;font-weight:400;text-align:center;">1</div><div class="t" style="left:0.0px;width:28px;top:270.15px;font-size:14px;line-height:14px;color:#217346;font-weight:700;text-align:center;">2</div><div class="t" style="left:0.0px;width:28px;top:292.15px;font-size:14px;line-height:14px;color:#217346;font-weight:700;text-align:center;">3</div><div class="t" style="left:0.0px;width:28px;top:314.15px;font-size:14px;line-height:14px;color:#217346;font-weight:700;text-align:center;">4</div><div class="t" style="left:0.0px;width:28px;top:336.15px;font-size:14px;line-height:14px;color:#217346;font-weight:700;text-align:center;">5</div><div class="t" style="left:0.0px;width:28px;top:358.15px;font-size:14px;line-height:14px;color:#217346;font-weight:700;text-align:center;">6</div><div class="t" style="left:0.0px;width:28px;top:380.15px;font-size:14px;line-height:14px;color:#217346;font-weight:700;text-align:center;">7</div><div class="t" style="left:0.0px;width:28px;top:402.15px;font-size:14px;line-height:14px;color:#217346;font-weight:700;text-align:center;">8</div><div class="t" style="left:0.0px;width:28px;top:424.15px;font-size:14px;line-height:14px;color:#217346;font-weight:700;text-align:center;">9</div><div class="t" style="left:0.0px;width:28px;top:446.15px;font-size:14px;line-height:14px;color:#217346;font-weight:700;text-align:center;">10</div><div class="t" style="left:0.0px;width:28px;top:468.15px;font-size:14px;line-height:14px;color:#217346;font-weight:700;text-align:center;">11</div><div class="t" style="left:0.0px;width:28px;top:490.15px;font-size:14px;line-height:14px;color:#217346;font-weight:700;text-align:center;">12</div><div class="t" style="left:0.0px;width:28px;top:512.15px;font-size:14px;line-height:14px;color:#217346;font-weight:700;text-align:center;">13</div><div class="t" style="left:0.0px;width:28px;top:534.15px;font-size:14px;line-height:14px;color:#217346;font-weight:700;text-align:center;">14</div><div class="t" style="left:0.0px;width:28px;top:556.15px;font-size:14px;line-height:14px;color:#217346;font-weight:700;text-align:center;">15</div><div class="t" style="left:0.0px;width:28px;top:578.15px;font-size:14px;line-height:14px;color:#217346;font-weight:700;text-align:center;">16</div><div class="t" style="left:0.0px;width:28px;top:600.15px;font-size:14px;line-height:14px;color:#217346;font-weight:700;text-align:center;">17</div><div class="t" style="left:0.0px;width:28px;top:622.15px;font-size:14px;line-height:14px;color:#217346;font-weight:700;text-align:center;">18</div><div class="t" style="left:0.0px;width:28px;top:644.15px;font-size:14px;line-height:14px;color:#217346;font-weight:700;text-align:center;">19</div><div class="t" style="left:0.0px;width:28px;top:666.15px;font-size:14px;line-height:14px;color:#217346;font-weight:700;text-align:center;">20</div><div class="t" style="left:0.0px;width:28px;top:688.15px;font-size:14px;line-height:14px;color:#217346;font-weight:700;text-align:center;">21</div><div class="t" style="left:0.0px;width:28px;top:710.15px;font-size:14px;line-height:14px;color:#217346;font-weight:700;text-align:center;">22</div><div class="t" style="left:0.0px;width:28px;top:732.15px;font-size:14px;line-height:14px;color:#217346;font-weight:700;text-align:center;">23</div><div class="t" style="left:0.0px;width:28px;top:754.15px;font-size:14px;line-height:14px;color:#217346;font-weight:700;text-align:center;">24</div><div class="t" style="left:0.0px;width:28px;top:776.15px;font-size:14px;line-height:14px;color:#217346;font-weight:700;text-align:center;">25</div><div class="t" style="left:0.0px;width:28px;top:798.15px;font-size:14px;line-height:14px;color:#217346;font-weight:700;text-align:center;">26</div><div class="t" style="left:0.0px;width:28px;top:820.15px;font-size:14px;line-height:14px;color:#444;font-weight:400;text-align:center;">27</div><div class="t" style="left:0.0px;width:28px;top:842.15px;font-size:14px;line-height:14px;color:#444;font-weight:400;text-align:center;">28</div><div class="t" style="left:0.0px;width:28px;top:864.15px;font-size:14px;line-height:14px;color:#444;font-weight:400;text-align:center;">29</div><div class="t" style="left:0.0px;width:28px;top:886.15px;font-size:14px;line-height:14px;color:#444;font-weight:400;text-align:center;">30</div><div class="t" style="left:0.0px;width:28px;top:908.15px;font-size:14px;line-height:14px;color:#444;font-weight:400;text-align:center;">31</div><div class="t" style="left:0.0px;width:28px;top:930.15px;font-size:14px;line-height:14px;color:#444;font-weight:400;text-align:center;">32</div><div class="t" style="left:0.0px;width:28px;top:952.15px;font-size:14px;line-height:14px;color:#444;font-weight:400;text-align:center;">33</div><div class="t" style="left:0.0px;width:28px;top:974.15px;font-size:14px;line-height:14px;color:#444;font-weight:400;text-align:center;">34</div><div class="t" style="left:31px;top:247.05px;font-size:15.3px;line-height:15.3px;color:#222;font-weight:400;letter-spacing:0px">Transactions</div><div class="t" style="left:121px;top:268.2px;font-size:16.3px;line-height:16.3px;color:#222;font-weight:400;letter-spacing:0px">amt</div><div class="t" style="left:236px;top:268.2px;font-size:16.3px;line-height:16.3px;color:#222;font-weight:400;letter-spacing:0px">Name</div><div class="t" style="left:458px;top:268.2px;font-size:16.3px;line-height:16.3px;color:#222;font-weight:400;letter-spacing:0px">Department</div><div class="t" style="left:602px;top:268.2px;font-size:16.3px;line-height:16.3px;color:#222;font-weight:400;letter-spacing:0px">Transaction code</div><div style="left:383px;top:265px;width:72px;height:22px;overflow:hidden"><div class="t"  style="left:3px;top:3.2px;font-size:16.3px;line-height:16.3px;color:#222;font-weight:400;letter-spacing:0.75px">Dept code</div></div><div style="left:30px;top:289px;width:87px;height:18px;background:#638ecc"></div><div style="left:120px;top:289px;width:4px;height:18px;background:#638ecc"></div><div style="left:30px;top:311px;width:87px;height:18px;background:#638ecc"></div><div style="left:120px;top:311px;width:5px;height:18px;background:#638ecc"></div><div style="left:30px;top:333px;width:87px;height:18px;background:#638ecc"></div><div style="left:120px;top:333px;width:2px;height:18px;background:#638ecc"></div><div style="left:30px;top:355px;width:87px;height:18px;background:#638ecc"></div><div style="left:120px;top:355px;width:5px;height:18px;background:#638ecc"></div><div style="left:30px;top:377px;width:87px;height:18px;background:#638ecc"></div><div style="left:120px;top:377px;width:8px;height:18px;background:#638ecc"></div><div style="left:30px;top:399px;width:87px;height:18px;background:#638ecc"></div><div style="left:120px;top:399px;width:5px;height:18px;background:#638ecc"></div><div style="left:30px;top:421px;width:87px;height:18px;background:#638ecc"></div><div style="left:120px;top:421px;width:3px;height:18px;background:#638ecc"></div><div style="left:30px;top:443px;width:87px;height:18px;background:#638ecc"></div><div style="left:120px;top:443px;width:10px;height:18px;background:#638ecc"></div><div style="left:30px;top:465px;width:87px;height:18px;background:#638ecc"></div><div style="left:120px;top:465px;width:7px;height:18px;background:#638ecc"></div><div style="left:30px;top:487px;width:87px;height:18px;background:#638ecc"></div><div style="left:120px;top:487px;width:4px;height:18px;background:#638ecc"></div><div style="left:30px;top:509px;width:87px;height:18px;background:#638ecc"></div><div style="left:120px;top:509px;width:2px;height:18px;background:#638ecc"></div><div style="left:30px;top:531px;width:87px;height:18px;background:#638ecc"></div><div style="left:120px;top:531px;width:7px;height:18px;background:#638ecc"></div><div style="left:30px;top:553px;width:87px;height:18px;background:#638ecc"></div><div style="left:120px;top:553px;width:2px;height:18px;background:#638ecc"></div><div style="left:30px;top:575px;width:87px;height:18px;background:#638ecc"></div><div style="left:120px;top:575px;width:5px;height:18px;background:#638ecc"></div><div style="left:30px;top:597px;width:87px;height:18px;background:#638ecc"></div><div style="left:120px;top:597px;width:2px;height:18px;background:#638ecc"></div><div style="left:30px;top:619px;width:87px;height:18px;background:#638ecc"></div><div style="left:120px;top:619px;width:4px;height:18px;background:#638ecc"></div><div style="left:30px;top:641px;width:87px;height:18px;background:#638ecc"></div><div style="left:120px;top:641px;width:6px;height:18px;background:#638ecc"></div><div style="left:30px;top:663px;width:87px;height:18px;background:#638ecc"></div><div style="left:120px;top:663px;width:3px;height:18px;background:#638ecc"></div><div style="left:30px;top:685px;width:87px;height:18px;background:#638ecc"></div><div style="left:120px;top:685px;width:5px;height:18px;background:#638ecc"></div><div style="left:30px;top:707px;width:87px;height:18px;background:#638ecc"></div><div style="left:120px;top:707px;width:10px;height:18px;background:#638ecc"></div><div style="left:30px;top:729px;width:87px;height:18px;background:#638ecc"></div><div style="left:120px;top:729px;width:4px;height:18px;background:#638ecc"></div><div style="left:30px;top:751px;width:87px;height:18px;background:#638ecc"></div><div style="left:120px;top:751px;width:5px;height:18px;background:#638ecc"></div><div style="left:30px;top:773px;width:87px;height:18px;background:#638ecc"></div><div style="left:120px;top:773px;width:4px;height:18px;background:#638ecc"></div><div style="left:30px;top:795px;width:87px;height:18px;background:#638ecc"></div><div style="left:120px;top:795px;width:1px;height:18px;background:#638ecc"></div><div style="left:28px;top:265px;width:571px;height:550px;background:rgba(0,0,0,0.224)"></div><div style="left:29px;top:266px;width:89px;height:21px;background:#fff"></div><div class="t" style="left:31px;top:268.2px;font-size:16.3px;line-height:16.3px;color:#222;font-weight:400;letter-spacing:0px">Date</div><div class="t" style="right:1805.5px;top:291.05px;font-size:15.3px;line-height:15.3px;color:#222;font-weight:400;text-align:right;letter-spacing:0.2px">11/2/11</div><div class="t" style="right:1693.5px;top:291.64px;font-size:14.6px;line-height:14.6px;color:#222;font-weight:400;text-align:right;letter-spacing:-0.3px">$1,300.00</div><div class="t" style="left:236px;top:290.2px;font-size:16.3px;line-height:16.3px;color:#222;font-weight:400;letter-spacing:0px">John</div><div class="t" style="left:386px;top:290.2px;font-size:16.3px;line-height:16.3px;color:#222;font-weight:400;letter-spacing:0px">Ads</div><div class="t" style="left:458px;top:290.2px;font-size:16.3px;line-height:16.3px;color:#222;font-weight:400;letter-spacing:0px">Advertising</div><div class="t" style="right:1251.3px;top:291.64px;font-size:14.6px;line-height:14.6px;color:#222;font-weight:400;text-align:right;letter-spacing:-0.3px">801010</div><div class="t" style="right:1805.5px;top:313.05px;font-size:15.3px;line-height:15.3px;color:#222;font-weight:400;text-align:right;letter-spacing:0.2px">11/3/11</div><div class="t" style="right:1693.5px;top:313.64px;font-size:14.6px;line-height:14.6px;color:#222;font-weight:400;text-align:right;letter-spacing:-0.3px">$1,830.00</div><div class="t" style="left:236px;top:312.2px;font-size:16.3px;line-height:16.3px;color:#222;font-weight:400;letter-spacing:0px">Jenny</div><div class="t" style="left:386px;top:312.2px;font-size:16.3px;line-height:16.3px;color:#222;font-weight:400;letter-spacing:0px">Evs</div><div class="t" style="left:458px;top:312.2px;font-size:16.3px;line-height:16.3px;color:#222;font-weight:400;letter-spacing:0px">Events</div><div class="t" style="right:1251.3px;top:313.64px;font-size:14.6px;line-height:14.6px;color:#222;font-weight:400;text-align:right;letter-spacing:-0.3px">802100</div><div class="t" style="right:1805.5px;top:335.05px;font-size:15.3px;line-height:15.3px;color:#222;font-weight:400;text-align:right;letter-spacing:0.2px">11/4/11</div><div class="t" style="right:1693.5px;top:335.64px;font-size:14.6px;line-height:14.6px;color:#222;font-weight:400;text-align:right;letter-spacing:-0.3px">$600.00</div><div class="t" style="left:236px;top:334.2px;font-size:16.3px;line-height:16.3px;color:#222;font-weight:400;letter-spacing:0px">Bill</div><div class="t" style="left:386px;top:334.2px;font-size:16.3px;line-height:16.3px;color:#222;font-weight:400;letter-spacing:0px">Dmg</div><div class="t" style="left:458px;top:334.2px;font-size:16.3px;line-height:16.3px;color:#222;font-weight:400;letter-spacing:0px">Digital Marketing</div><div class="t" style="right:1251.3px;top:335.64px;font-size:14.6px;line-height:14.6px;color:#222;font-weight:400;text-align:right;letter-spacing:-0.3px">804020</div><div class="t" style="right:1805.5px;top:357.05px;font-size:15.3px;line-height:15.3px;color:#222;font-weight:400;text-align:right;letter-spacing:0.2px">11/7/11</div><div class="t" style="right:1693.5px;top:357.64px;font-size:14.6px;line-height:14.6px;color:#222;font-weight:400;text-align:right;letter-spacing:-0.3px">$1,800.00</div><div class="t" style="left:236px;top:356.2px;font-size:16.3px;line-height:16.3px;color:#222;font-weight:400;letter-spacing:0px">Sally</div><div class="t" style="left:386px;top:356.2px;font-size:16.3px;line-height:16.3px;color:#222;font-weight:400;letter-spacing:0px">Pro</div><div class="t" style="left:458px;top:356.2px;font-size:16.3px;line-height:16.3px;color:#222;font-weight:400;letter-spacing:0px">Promotions</div><div class="t" style="right:1251.3px;top:357.64px;font-size:14.6px;line-height:14.6px;color:#222;font-weight:400;text-align:right;letter-spacing:-0.3px">807800</div><div class="t" style="right:1805.5px;top:379.05px;font-size:15.3px;line-height:15.3px;color:#222;font-weight:400;text-align:right;letter-spacing:0.2px">11/8/11</div><div class="t" style="right:1693.5px;top:379.64px;font-size:14.6px;line-height:14.6px;color:#222;font-weight:400;text-align:right;letter-spacing:-0.3px">$2,730.00</div><div class="t" style="left:236px;top:378.2px;font-size:16.3px;line-height:16.3px;color:#222;font-weight:400;letter-spacing:0px">Paul</div><div class="t" style="left:386px;top:378.2px;font-size:16.3px;line-height:16.3px;color:#222;font-weight:400;letter-spacing:0px">Ads</div><div class="t" style="left:458px;top:378.2px;font-size:16.3px;line-height:16.3px;color:#222;font-weight:400;letter-spacing:0px">Advertising</div><div class="t" style="right:1251.3px;top:379.64px;font-size:14.6px;line-height:14.6px;color:#222;font-weight:400;text-align:right;letter-spacing:-0.3px">801010</div><div class="t" style="right:1805.5px;top:401.05px;font-size:15.3px;line-height:15.3px;color:#222;font-weight:400;text-align:right;letter-spacing:0.2px">11/8/11</div><div class="t" style="right:1693.5px;top:401.64px;font-size:14.6px;line-height:14.6px;color:#222;font-weight:400;text-align:right;letter-spacing:-0.3px">$1,750.00</div><div class="t" style="left:236px;top:400.2px;font-size:16.3px;line-height:16.3px;color:#222;font-weight:400;letter-spacing:0px">Paul</div><div class="t" style="left:386px;top:400.2px;font-size:16.3px;line-height:16.3px;color:#222;font-weight:400;letter-spacing:0px">Evs</div><div class="t" style="left:458px;top:400.2px;font-size:16.3px;line-height:16.3px;color:#222;font-weight:400;letter-spacing:0px">Events</div><div class="t" style="right:1251.3px;top:401.64px;font-size:14.6px;line-height:14.6px;color:#222;font-weight:400;text-align:right;letter-spacing:-0.3px">802100</div><div class="t" style="right:1805.5px;top:423.05px;font-size:15.3px;line-height:15.3px;color:#222;font-weight:400;text-align:right;letter-spacing:0.2px">11/9/11</div><div class="t" style="right:1693.5px;top:423.64px;font-size:14.6px;line-height:14.6px;color:#222;font-weight:400;text-align:right;letter-spacing:-0.3px">$1,200.00</div><div class="t" style="left:236px;top:422.2px;font-size:16.3px;line-height:16.3px;color:#222;font-weight:400;letter-spacing:0px">John</div><div class="t" style="left:386px;top:422.2px;font-size:16.3px;line-height:16.3px;color:#222;font-weight:400;letter-spacing:0px">Dmg</div><div class="t" style="left:458px;top:422.2px;font-size:16.3px;line-height:16.3px;color:#222;font-weight:400;letter-spacing:0px">Digital Marketing</div><div class="t" style="right:1251.3px;top:423.64px;font-size:14.6px;line-height:14.6px;color:#222;font-weight:400;text-align:right;letter-spacing:-0.3px">804020</div><div class="t" style="right:1805.5px;top:445.05px;font-size:15.3px;line-height:15.3px;color:#222;font-weight:400;text-align:right;letter-spacing:0.2px">11/10/11</div><div class="t" style="right:1693.5px;top:445.64px;font-size:14.6px;line-height:14.6px;color:#222;font-weight:400;text-align:right;letter-spacing:-0.3px">$3,500.00</div><div class="t" style="left:236px;top:444.2px;font-size:16.3px;line-height:16.3px;color:#222;font-weight:400;letter-spacing:0px">John</div><div class="t" style="left:386px;top:444.2px;font-size:16.3px;line-height:16.3px;color:#222;font-weight:400;letter-spacing:0px">Prs</div><div class="t" style="left:458px;top:444.2px;font-size:16.3px;line-height:16.3px;color:#222;font-weight:400;letter-spacing:0px">Public Relations</div><div class="t" style="right:1805.5px;top:467.05px;font-size:15.3px;line-height:15.3px;color:#222;font-weight:400;text-align:right;letter-spacing:0.2px">11/11/11</div><div class="t" style="right:1693.5px;top:467.64px;font-size:14.6px;line-height:14.6px;color:#222;font-weight:400;text-align:right;letter-spacing:-0.3px">$2,500.00</div><div class="t" style="left:236px;top:466.2px;font-size:16.3px;line-height:16.3px;color:#222;font-weight:400;letter-spacing:0px">Jenny</div><div class="t" style="left:386px;top:466.2px;font-size:16.3px;line-height:16.3px;color:#222;font-weight:400;letter-spacing:0px">Pro</div><div class="t" style="left:458px;top:466.2px;font-size:16.3px;line-height:16.3px;color:#222;font-weight:400;letter-spacing:0px">Promotions</div><div class="t" style="right:1805.5px;top:489.05px;font-size:15.3px;line-height:15.3px;color:#222;font-weight:400;text-align:right;letter-spacing:0.2px">11/14/11</div><div class="t" style="right:1693.5px;top:489.64px;font-size:14.6px;line-height:14.6px;color:#222;font-weight:400;text-align:right;letter-spacing:-0.3px">$1,500.00</div><div class="t" style="left:236px;top:488.2px;font-size:16.3px;line-height:16.3px;color:#222;font-weight:400;letter-spacing:0px">Bill</div><div class="t" style="left:386px;top:488.2px;font-size:16.3px;line-height:16.3px;color:#222;font-weight:400;letter-spacing:0px">Evs</div><div class="t" style="left:458px;top:488.2px;font-size:16.3px;line-height:16.3px;color:#222;font-weight:400;letter-spacing:0px">Events</div><div class="t" style="right:1805.5px;top:511.05px;font-size:15.3px;line-height:15.3px;color:#222;font-weight:400;text-align:right;letter-spacing:0.2px">11/15/11</div><div class="t" style="right:1693.5px;top:511.64px;font-size:14.6px;line-height:14.6px;color:#222;font-weight:400;text-align:right;letter-spacing:-0.3px">$800.00</div><div class="t" style="left:236px;top:510.2px;font-size:16.3px;line-height:16.3px;color:#222;font-weight:400;letter-spacing:0px">Sally</div><div class="t" style="left:386px;top:510.2px;font-size:16.3px;line-height:16.3px;color:#222;font-weight:400;letter-spacing:0px">Ads</div><div class="t" style="left:458px;top:510.2px;font-size:16.3px;line-height:16.3px;color:#222;font-weight:400;letter-spacing:0px">Advertising</div><div class="t" style="right:1805.5px;top:533.05px;font-size:15.3px;line-height:15.3px;color:#222;font-weight:400;text-align:right;letter-spacing:0.2px">11/17/11</div><div class="t" style="right:1693.5px;top:533.64px;font-size:14.6px;line-height:14.6px;color:#222;font-weight:400;text-align:right;letter-spacing:-0.3px">$2,370.00</div><div class="t" style="left:236px;top:532.2px;font-size:16.3px;line-height:16.3px;color:#222;font-weight:400;letter-spacing:0px">John</div><div class="t" style="left:386px;top:532.2px;font-size:16.3px;line-height:16.3px;color:#222;font-weight:400;letter-spacing:0px">Evs</div><div class="t" style="left:458px;top:532.2px;font-size:16.3px;line-height:16.3px;color:#222;font-weight:400;letter-spacing:0px">Events</div><div class="t" style="right:1805.5px;top:555.05px;font-size:15.3px;line-height:15.3px;color:#222;font-weight:400;text-align:right;letter-spacing:0.2px">11/18/11</div><div class="t" style="right:1693.5px;top:555.64px;font-size:14.6px;line-height:14.6px;color:#222;font-weight:400;text-align:right;letter-spacing:-0.3px">$700.00</div><div class="t" style="left:236px;top:554.2px;font-size:16.3px;line-height:16.3px;color:#222;font-weight:400;letter-spacing:0px">Bill</div><div class="t" style="left:386px;top:554.2px;font-size:16.3px;line-height:16.3px;color:#222;font-weight:400;letter-spacing:0px">Dmg</div><div class="t" style="left:458px;top:554.2px;font-size:16.3px;line-height:16.3px;color:#222;font-weight:400;letter-spacing:0px">Digital Marketing</div><div class="t" style="right:1805.5px;top:577.05px;font-size:15.3px;line-height:15.3px;color:#222;font-weight:400;text-align:right;letter-spacing:0.2px">11/18/11</div><div class="t" style="right:1693.5px;top:577.64px;font-size:14.6px;line-height:14.6px;color:#222;font-weight:400;text-align:right;letter-spacing:-0.3px">$1,800.00</div><div class="t" style="left:236px;top:576.2px;font-size:16.3px;line-height:16.3px;color:#222;font-weight:400;letter-spacing:0px">Paul</div><div class="t" style="left:386px;top:576.2px;font-size:16.3px;line-height:16.3px;color:#222;font-weight:400;letter-spacing:0px">Prs</div><div class="t" style="left:458px;top:576.2px;font-size:16.3px;line-height:16.3px;color:#222;font-weight:400;letter-spacing:0px">Public Relations</div><div class="t" style="right:1805.5px;top:599.05px;font-size:15.3px;line-height:15.3px;color:#222;font-weight:400;text-align:right;letter-spacing:0.2px">11/21/11</div><div class="t" style="right:1693.5px;top:599.64px;font-size:14.6px;line-height:14.6px;color:#222;font-weight:400;text-align:right;letter-spacing:-0.3px">$550.00</div><div class="t" style="left:236px;top:598.2px;font-size:16.3px;line-height:16.3px;color:#222;font-weight:400;letter-spacing:0px">Bill</div><div class="t" style="left:386px;top:598.2px;font-size:16.3px;line-height:16.3px;color:#222;font-weight:400;letter-spacing:0px">Evs</div><div class="t" style="left:458px;top:598.2px;font-size:16.3px;line-height:16.3px;color:#222;font-weight:400;letter-spacing:0px">Events</div><div class="t" style="right:1805.5px;top:621.05px;font-size:15.3px;line-height:15.3px;color:#222;font-weight:400;text-align:right;letter-spacing:0.2px">11/21/11</div><div class="t" style="right:1693.5px;top:621.64px;font-size:14.6px;line-height:14.6px;color:#222;font-weight:400;text-align:right;letter-spacing:-0.3px">$1,420.00</div><div class="t" style="left:236px;top:620.2px;font-size:16.3px;line-height:16.3px;color:#222;font-weight:400;letter-spacing:0px">Bill</div><div class="t" style="left:386px;top:620.2px;font-size:16.3px;line-height:16.3px;color:#222;font-weight:400;letter-spacing:0px">Pro</div><div class="t" style="left:458px;top:620.2px;font-size:16.3px;line-height:16.3px;color:#222;font-weight:400;letter-spacing:0px">Promotions</div><div class="t" style="right:1805.5px;top:643.05px;font-size:15.3px;line-height:15.3px;color:#222;font-weight:400;text-align:right;letter-spacing:0.2px">11/22/11</div><div class="t" style="right:1693.5px;top:643.64px;font-size:14.6px;line-height:14.6px;color:#222;font-weight:400;text-align:right;letter-spacing:-0.3px">$2,210.00</div><div class="t" style="left:236px;top:642.2px;font-size:16.3px;line-height:16.3px;color:#222;font-weight:400;letter-spacing:0px">Jenny</div><div class="t" style="left:386px;top:642.2px;font-size:16.3px;line-height:16.3px;color:#222;font-weight:400;letter-spacing:0px">Ads</div><div class="t" style="left:458px;top:642.2px;font-size:16.3px;line-height:16.3px;color:#222;font-weight:400;letter-spacing:0px">Advertising</div><div class="t" style="right:1805.5px;top:665.05px;font-size:15.3px;line-height:15.3px;color:#222;font-weight:400;text-align:right;letter-spacing:0.2px">11/23/11</div><div class="t" style="right:1693.5px;top:665.64px;font-size:14.6px;line-height:14.6px;color:#222;font-weight:400;text-align:right;letter-spacing:-0.3px">$920.00</div><div class="t" style="left:236px;top:664.2px;font-size:16.3px;line-height:16.3px;color:#222;font-weight:400;letter-spacing:0px">Sally</div><div class="t" style="left:386px;top:664.2px;font-size:16.3px;line-height:16.3px;color:#222;font-weight:400;letter-spacing:0px">Dmg</div><div class="t" style="left:458px;top:664.2px;font-size:16.3px;line-height:16.3px;color:#222;font-weight:400;letter-spacing:0px">Digital Marketing</div><div class="t" style="right:1805.5px;top:687.05px;font-size:15.3px;line-height:15.3px;color:#222;font-weight:400;text-align:right;letter-spacing:0.2px">11/23/11</div><div class="t" style="right:1693.5px;top:687.64px;font-size:14.6px;line-height:14.6px;color:#222;font-weight:400;text-align:right;letter-spacing:-0.3px">$1,680.00</div><div class="t" style="left:236px;top:686.2px;font-size:16.3px;line-height:16.3px;color:#222;font-weight:400;letter-spacing:0px">Sally</div><div class="t" style="left:386px;top:686.2px;font-size:16.3px;line-height:16.3px;color:#222;font-weight:400;letter-spacing:0px">Prs</div><div class="t" style="left:458px;top:686.2px;font-size:16.3px;line-height:16.3px;color:#222;font-weight:400;letter-spacing:0px">Public Relations</div><div class="t" style="right:1805.5px;top:709.05px;font-size:15.3px;line-height:15.3px;color:#222;font-weight:400;text-align:right;letter-spacing:0.2px">11/24/11</div><div class="t" style="right:1693.5px;top:709.64px;font-size:14.6px;line-height:14.6px;color:#222;font-weight:400;text-align:right;letter-spacing:-0.3px">$3,500.00</div><div class="t" style="left:236px;top:708.2px;font-size:16.3px;line-height:16.3px;color:#222;font-weight:400;letter-spacing:0px">Sally</div><div class="t" style="left:386px;top:708.2px;font-size:16.3px;line-height:16.3px;color:#222;font-weight:400;letter-spacing:0px">Prs</div><div class="t" style="left:458px;top:708.2px;font-size:16.3px;line-height:16.3px;color:#222;font-weight:400;letter-spacing:0px">Public Relations</div><div class="t" style="right:1805.5px;top:731.05px;font-size:15.3px;line-height:15.3px;color:#222;font-weight:400;text-align:right;letter-spacing:0.2px">11/25/11</div><div class="t" style="right:1693.5px;top:731.64px;font-size:14.6px;line-height:14.6px;color:#222;font-weight:400;text-align:right;letter-spacing:-0.3px">$1,400.00</div><div class="t" style="left:236px;top:730.2px;font-size:16.3px;line-height:16.3px;color:#222;font-weight:400;letter-spacing:0px">Jenny</div><div class="t" style="left:386px;top:730.2px;font-size:16.3px;line-height:16.3px;color:#222;font-weight:400;letter-spacing:0px">Pro</div><div class="t" style="left:458px;top:730.2px;font-size:16.3px;line-height:16.3px;color:#222;font-weight:400;letter-spacing:0px">Promotions</div><div class="t" style="right:1805.5px;top:753.05px;font-size:15.3px;line-height:15.3px;color:#222;font-weight:400;text-align:right;letter-spacing:0.2px">11/28/11</div><div class="t" style="right:1693.5px;top:753.64px;font-size:14.6px;line-height:14.6px;color:#222;font-weight:400;text-align:right;letter-spacing:-0.3px">$1,800.00</div><div class="t" style="left:236px;top:752.2px;font-size:16.3px;line-height:16.3px;color:#222;font-weight:400;letter-spacing:0px">John</div><div class="t" style="left:386px;top:752.2px;font-size:16.3px;line-height:16.3px;color:#222;font-weight:400;letter-spacing:0px">Evs</div><div class="t" style="left:458px;top:752.2px;font-size:16.3px;line-height:16.3px;color:#222;font-weight:400;letter-spacing:0px">Events</div><div class="t" style="right:1805.5px;top:775.05px;font-size:15.3px;line-height:15.3px;color:#222;font-weight:400;text-align:right;letter-spacing:0.2px">11/29/11</div><div class="t" style="right:1693.5px;top:775.64px;font-size:14.6px;line-height:14.6px;color:#222;font-weight:400;text-align:right;letter-spacing:-0.3px">$1,300.00</div><div class="t" style="left:236px;top:774.2px;font-size:16.3px;line-height:16.3px;color:#222;font-weight:400;letter-spacing:0px">Bill</div><div class="t" style="left:386px;top:774.2px;font-size:16.3px;line-height:16.3px;color:#222;font-weight:400;letter-spacing:0px">Ads</div><div class="t" style="left:458px;top:774.2px;font-size:16.3px;line-height:16.3px;color:#222;font-weight:400;letter-spacing:0px">Advertising</div><div class="t" style="right:1805.5px;top:797.05px;font-size:15.3px;line-height:15.3px;color:#222;font-weight:400;text-align:right;letter-spacing:0.2px">11/30/11</div><div class="t" style="right:1693.5px;top:797.64px;font-size:14.6px;line-height:14.6px;color:#222;font-weight:400;text-align:right;letter-spacing:-0.3px">$510.00</div><div class="t" style="left:236px;top:796.2px;font-size:16.3px;line-height:16.3px;color:#222;font-weight:400;letter-spacing:0px">Sally</div><div class="t" style="left:386px;top:796.2px;font-size:16.3px;line-height:16.3px;color:#222;font-weight:400;letter-spacing:0px">Dmg</div><div class="t" style="left:458px;top:796.2px;font-size:16.3px;line-height:16.3px;color:#222;font-weight:400;letter-spacing:0px">Digital Marketing</div><div style="left:28px;top:242px;width:571px;height:2px;background:#217346"></div><div style="left:27px;top:265px;width:2px;height:550px;background:#217346"></div><div style="left:27px;top:264px;width:574px;height:553px;border:2px solid #217346;box-sizing:border-box"></div><div style="left:1898px;top:243px;width:1px;height:742px;background:#bcbcbc"></div><div style="left:0px;top:984px;width:1898px;height:1px;background:#bcbcbc"></div><div style="left:1899px;top:222px;width:21px;height:763px;background:#fff"></div><div style="left:1902px;top:946px;width:16px;height:25px;background:#ececec"></div><div style="left:1902px;top:224px;width:16px;height:15px;background:#fff;border:1px solid #ababab;box-sizing:border-box"></div><svg style="left:1906px;top:229px;" width="8" height="5" viewBox="0 0 8 5"><path d="M0 4 L4 0 L8 4 Z" fill="#606060"/></svg><div style="left:1902px;top:241px;width:16px;height:706px;background:#fff;border:1px solid #ababab;box-sizing:border-box"></div><div style="left:1902px;top:971px;width:16px;height:14px;background:#fff;border:1px solid #d4d4d4;box-sizing:border-box"></div><svg style="left:1906px;top:976px;" width="8" height="5" viewBox="0 0 8 5"><path d="M0 0 L8 0 L4 4 Z" fill="#606060"/></svg><div style="left:0px;top:985px;width:1920px;height:27px;background:#f3f3f3"></div><svg style="left:26px;top:994px;" width="6" height="9" viewBox="0 0 6 9"><path d="M5 0 L0 4.5 L5 9 Z" fill="#c0c0c0"/></svg><svg style="left:55px;top:994px;" width="6" height="9" viewBox="0 0 6 9"><path d="M0 0 L5 4.5 L0 9 Z" fill="#c0c0c0"/></svg><div style="left:100px;top:988px;width:1px;height:20px;background:#c8c8c8"></div><div class="t" style="left:102.5px;width:60px;top:991.84px;font-size:12px;line-height:12px;color:#444;font-weight:400;text-align:center;">Sheet1</div><div style="left:165px;top:988px;width:1px;height:20px;background:#c8c8c8"></div><div class="t" style="left:167.5px;width:60px;top:991.84px;font-size:12px;line-height:12px;color:#444;font-weight:400;text-align:center;">Sheet2</div><div style="left:230px;top:988px;width:1px;height:20px;background:#c8c8c8"></div><div class="t" style="left:232.5px;width:60px;top:991.84px;font-size:12px;line-height:12px;color:#444;font-weight:400;text-align:center;">Sheet3</div><div style="left:295px;top:988px;width:1px;height:20px;background:#c8c8c8"></div><div class="t" style="left:297.5px;width:60px;top:991.84px;font-size:12px;line-height:12px;color:#444;font-weight:400;text-align:center;">Sheet4</div><div style="left:360px;top:988px;width:1px;height:20px;background:#c8c8c8"></div><div class="t" style="left:362.5px;width:60px;top:991.84px;font-size:12px;line-height:12px;color:#444;font-weight:400;text-align:center;">Sheet5</div><svg style="left:1151px;top:991px;" width="4" height="14" viewBox="0 0 4 14"><circle cx="2" cy="2" r="1" fill="#999"/><circle cx="2" cy="7" r="1" fill="#999"/><circle cx="2" cy="12" r="1" fill="#999"/></svg><div style="left:1169px;top:991px;width:730px;height:15px;background:#e8e8e8"></div><div style="left:1169px;top:991px;width:14px;height:15px;background:#fff;border:1px solid #ababab;box-sizing:border-box"></div><svg style="left:1174px;top:995px;" width="5" height="8" viewBox="0 0 5 8"><path d="M4 0 L0 4 L4 8 Z" fill="#606060"/></svg><div style="left:1184px;top:991px;width:670px;height:15px;background:#fff;border:1px solid #ababab;box-sizing:border-box"></div><div style="left:1885px;top:991px;width:14px;height:15px;background:#fff;border:1px solid #ababab;box-sizing:border-box"></div><svg style="left:1890px;top:995px;" width="5" height="8" viewBox="0 0 5 8"><path d="M0 0 L4 4 L0 8 Z" fill="#606060"/></svg><div style="left:0px;top:1012px;width:1920px;height:28px;background:#217346"></div><div class="t" style="left:14px;top:1020.99px;font-size:11px;line-height:11px;color:#e8f3ec;font-weight:700;letter-spacing:-1.1px">READY</div><div class="t" style="left:1288px;top:1020.99px;font-size:11px;line-height:11px;color:#e8f3ec;font-weight:700;letter-spacing:-0.4px">AVERAGE: 3/14/58</div><div class="t" style="left:1409px;top:1020.99px;font-size:11px;line-height:11px;color:#e8f3ec;font-weight:700;letter-spacing:-0.5px">COUNT: 125</div><div class="t" style="left:1498px;top:1020.99px;font-size:11px;line-height:11px;color:#e8f3ec;font-weight:700;letter-spacing:0px">SUM: 9/21/93</div><div style="left:1592px;top:1012px;width:46px;height:28px;background:#1b5e39"></div><svg style="left:1606px;top:1018px;" width="16" height="16" viewBox="0 0 16 16"><g fill="none" stroke="#e8f3ec" stroke-width="1.2"><rect x="1" y="1" width="14" height="14"/><path d="M5.7 1 V15 M10.3 1 V15 M1 5.7 H15 M1 10.3 H15"/></g></svg><svg style="left:1653px;top:1018px;" width="16" height="16" viewBox="0 0 16 16"><g fill="none" stroke="#e8f3ec" stroke-width="1.2"><rect x="1" y="1" width="14" height="14"/><rect x="4" y="4" width="8" height="8"/><path d="M5.5 6.5 H10.5 M5.5 8.5 H10.5"/></g></svg><svg style="left:1699px;top:1018px;" width="16" height="16" viewBox="0 0 16 16"><g fill="none" stroke="#e8f3ec" stroke-width="1.2"><rect x="1" y="1" width="14" height="14"/></g><rect x="2" y="2" width="4" height="6" fill="#e8f3ec"/><rect x="7" y="2" width="5" height="6" fill="#e8f3ec"/></svg><div style="left:1735px;top:1025px;width:7px;height:2px;background:#e8f3ec"></div><div style="left:1745px;top:1025px;width:100px;height:1px;background:#e8f3ec"></div><div style="left:1794px;top:1020px;width:3px;height:11px;background:#e8f3ec"></div><div class="t" style="left:1843.0px;width:20px;top:1018.3px;font-size:15px;line-height:15px;color:#e8f3ec;font-weight:700;text-align:center;">+</div><div class="t" style="left:1879px;top:1020.99px;font-size:11px;line-height:11px;color:#e8f3ec;font-weight:700;letter-spacing:-1px">100%</div><svg style="left:0px;top:1041px;" width="1920" height="39" viewBox="0 0 1920 39"><defs><linearGradient id="tb" x1="0" y1="0" x2="1" y2="0"><stop offset="0.0000" stop-color="#6cc024"/><stop offset="0.0500" stop-color="#7ad62a"/><stop offset="0.1849" stop-color="#7ad62a"/><stop offset="0.1917" stop-color="#66ba20"/><stop offset="0.2865" stop-color="#66ba20"/><stop offset="0.2927" stop-color="#80dc2e"/><stop offset="0.4479" stop-color="#80dc2e"/><stop offset="0.4552" stop-color="#6cc222"/><stop offset="0.5703" stop-color="#6cc222"/><stop offset="0.5771" stop-color="#7ed82c"/><stop offset="0.7526" stop-color="#7ed82c"/><stop offset="0.7594" stop-color="#64b41e"/><stop offset="0.7958" stop-color="#66b820"/><stop offset="0.8031" stop-color="#7cd62a"/><stop offset="0.9115" stop-color="#7cd62a"/><stop offset="1.0000" stop-color="#72c826"/></linearGradient></defs><rect width="1920" height="39" fill="url(#tb)"/><path d="M440 40 L470 22 L520 12 L505 40 Z" fill="#5aa81c" opacity="0.7"/><rect width="1920" height="1" fill="#a8ec78"/></svg><div style="left:0px;top:1040px;width:1920px;height:1px;background:#1b5a12"></div><svg style="left:30px;top:1044px;" width="34" height="32" viewBox="0 0 34 32"><path d="M6.5 16 H25.5 A10 10 0 1 0 22.5 23" fill="none" stroke="#1b6e9e" stroke-width="8"/><path d="M6.5 16 H25.5 A10 10 0 1 0 22.5 23" fill="none" stroke="#6ccdf5" stroke-width="5.5"/><path d="M4 29 Q-1 17 12 6 Q20 0 27 1.5" fill="none" stroke="#f2c200" stroke-width="2.6"/></svg><svg style="left:91px;top:1046px;" width="34" height="32" viewBox="0 0 34 32"><rect x="2" y="6" width="28" height="22" fill="#f5d580"/><rect x="2" y="3" width="12" height="5" fill="#f5d580"/><rect x="4" y="2" width="3" height="2" fill="#2a9d3a"/><rect x="12" y="3" width="3" height="2" fill="#c0392b"/><rect x="22" y="4" width="3" height="2" fill="#2e86c1"/><rect x="2" y="16" width="28" height="12" fill="#f8e2a0"/><path d="M5 19 H27 V29 H22 V23 H10 V29 H5 Z" fill="#8cc6ee"/></svg><div style="left:140px;top:1041px;width:60px;height:39px;background:linear-gradient(90deg,#d0eeb0,#e8f8d8 30%,#d8f2b8 60%,#b8e890);border:1px solid #1e3a10;border-top:none;box-shadow:inset 0 0 0 1px #e8f8d0;box-sizing:border-box"></div><svg style="left:154px;top:1044px;" width="32" height="32" viewBox="0 0 32 32"><rect width="32" height="32" fill="#1e6b3d"/><path d="M6 7 L18 5 L18 27 L6 25 Z" fill="#fff"/><rect x="18" y="8" width="8" height="16" fill="#fff"/><rect x="19.5" y="10" width="5" height="2" fill="#1e6b3d"/><rect x="19.5" y="14" width="5" height="2" fill="#1e6b3d"/><rect x="19.5" y="18" width="5" height="2" fill="#1e6b3d"/><text x="7.5" y="21" font-family="Liberation Sans" font-weight="700" font-size="11" fill="#1e6b3d">X</text></svg><div style="left:202px;top:1041px;width:56px;height:39px;background:radial-gradient(ellipse at 50% 20%,#fff8a0 0%,#f8e050 35%,#f0a828 75%,#e88a18 100%);border:1px solid #3a2a08;border-top:none;box-shadow:inset 0 0 0 1px #f8e880;box-sizing:border-box"></div><svg style="left:213px;top:1044px;" width="33" height="32" viewBox="0 0 33 32"><rect width="31" height="32" fill="#1f6fc0"/><path d="M6 7 L17 5 L17 27 L6 25 Z" fill="#fff"/><text x="8" y="21" font-family="Liberation Sans" font-weight="700" font-size="11" fill="#1f6fc0">L</text><path d="M19 11 A4 4 0 1 1 19 19" fill="none" stroke="#fff" stroke-width="2"/><rect x="22" y="22" width="11" height="10" fill="#5cc05c"/></svg><div style="left:258px;top:1041px;width:3px;height:39px;background:#98d860"></div><div style="left:261px;top:1041px;width:1px;height:39px;background:#2a4a10"></div><svg style="left:1765px;top:1056px;" width="10" height="6" viewBox="0 0 10 6"><path d="M0 5 L5 0 L10 5 Z" fill="#fff"/></svg><svg style="left:1786px;top:1051px;" width="18" height="17" viewBox="0 0 18 17"><rect x="1" y="1" width="10" height="8" fill="none" stroke="#fff" stroke-width="1.3"/><rect x="6" y="6" width="10" height="8" fill="#6cc020" stroke="#fff" stroke-width="1.3"/><path d="M11 15 V17 M7 17 H15" stroke="#fff"/></svg><svg style="left:1812px;top:1052px;" width="14" height="16" viewBox="0 0 14 16"><path d="M1 5 H4 L8 1 V15 L4 11 H1 Z" fill="#fff"/><path d="M10 5 Q12 8 10 11" fill="none" stroke="#fff" stroke-width="1.2"/></svg><div class="t" style="left:1830.5px;width:80px;top:1046.84px;font-size:12px;line-height:12px;color:#eef8e4;font-weight:400;text-align:center;">10:34 PM</div><div class="t" style="left:1830.0px;width:80px;top:1063.34px;font-size:12px;line-height:12px;color:#eef8e4;font-weight:400;text-align:center;">7/13/2012</div><div style="left:406px;top:529px;width:506px;height:314px;background:#fff;border:1px solid #446b55;box-sizing:border-box;box-shadow:0 0 2px rgba(0,0,0,0.15)"></div><div style="left:419px;top:542px;width:480px;height:288px;border:1px solid #d9d9d9;box-sizing:border-box"></div><div class="t" style="left:508.5px;width:300px;top:554.49px;font-size:19.5px;line-height:19.5px;color:#666;font-weight:400;text-align:center;letter-spacing:0.5px">Sum of amt by Name</div><svg style="left:878px;top:552px;" width="11" height="11" viewBox="0 0 11 11"><defs><linearGradient id="pg" x1="0" y1="0" x2="1" y2="1"><stop offset="0" stop-color="#fff"/><stop offset="0.5" stop-color="#b8c8dc"/><stop offset="1" stop-color="#1e3050"/></linearGradient></defs><rect x="0.5" y="0.5" width="10" height="10" fill="#fff" stroke="#333"/><path d="M1 10 L5 5.5 L7 7.5 L10 5 V10 Z" fill="url(#pg)"/><circle cx="7.5" cy="3" r="1.2" fill="#9a6a8a"/></svg><div style="left:472px;top:799px;width:413px;height:1px;background:#d9d9d9"></div><div class="t" style="right:1459px;top:793.84px;font-size:12px;line-height:12px;color:#6a6a6a;font-weight:400;text-align:right;letter-spacing:0px">0</div><div style="left:472px;top:764px;width:413px;height:1px;background:#d9d9d9"></div><div class="t" style="right:1459px;top:758.84px;font-size:12px;line-height:12px;color:#6a6a6a;font-weight:400;text-align:right;letter-spacing:0px">2000</div><div style="left:472px;top:730px;width:413px;height:1px;background:#d9d9d9"></div><div class="t" style="right:1459px;top:724.84px;font-size:12px;line-height:12px;color:#6a6a6a;font-weight:400;text-align:right;letter-spacing:0px">4000</div><div style="left:472px;top:695px;width:413px;height:1px;background:#d9d9d9"></div><div class="t" style="right:1459px;top:689.84px;font-size:12px;line-height:12px;color:#6a6a6a;font-weight:400;text-align:right;letter-spacing:0px">6000</div><div style="left:472px;top:660px;width:413px;height:1px;background:#d9d9d9"></div><div class="t" style="right:1459px;top:654.84px;font-size:12px;line-height:12px;color:#6a6a6a;font-weight:400;text-align:right;letter-spacing:0px">8000</div><div style="left:472px;top:626px;width:413px;height:1px;background:#d9d9d9"></div><div class="t" style="right:1459px;top:620.84px;font-size:12px;line-height:12px;color:#6a6a6a;font-weight:400;text-align:right;letter-spacing:0px">10000</div><div style="left:472px;top:591px;width:413px;height:1px;background:#d9d9d9"></div><div class="t" style="right:1459px;top:585.84px;font-size:12px;line-height:12px;color:#6a6a6a;font-weight:400;text-align:right;letter-spacing:0px">12000</div><div style="left:500px;top:694px;width:26px;height:106px;background:#7dce3a"></div><div class="t" style="left:473.29999999999995px;width:80px;top:808.84px;font-size:12px;line-height:12px;color:#6a6a6a;font-weight:400;text-align:center;letter-spacing:0.4px">Bill</div><div style="left:583px;top:662px;width:26px;height:138px;background:#7dce3a"></div><div class="t" style="left:555.9px;width:80px;top:808.84px;font-size:12px;line-height:12px;color:#6a6a6a;font-weight:400;text-align:center;letter-spacing:0.4px">Jenny</div><div style="left:665px;top:623px;width:26px;height:177px;background:#7dce3a"></div><div class="t" style="left:638.5px;width:80px;top:808.84px;font-size:12px;line-height:12px;color:#6a6a6a;font-weight:400;text-align:center;letter-spacing:0.4px">John</div><div style="left:748px;top:691px;width:26px;height:109px;background:#7dce3a"></div><div class="t" style="left:721.0999999999999px;width:80px;top:808.84px;font-size:12px;line-height:12px;color:#6a6a6a;font-weight:400;text-align:center;letter-spacing:0.4px">Paul</div><div style="left:831px;top:640px;width:26px;height:160px;background:#7dce3a"></div><div class="t" style="left:803.6999999999999px;width:80px;top:808.84px;font-size:12px;line-height:12px;color:#6a6a6a;font-weight:400;text-align:center;letter-spacing:0.4px">Sally</div><svg style="left:604px;top:842px;" width="24" height="11" viewBox="0 0 24 11"><path d="M0 10.5 L12 0.5 L24 10.5" fill="#fff" stroke="#446b55" stroke-width="1"/></svg><div style="left:406px;top:852px;width:418px;height:164px;background:#fff;border:1px solid #446b55;box-sizing:border-box;box-shadow:0 0 2px rgba(0,0,0,0.15)"></div><div style="left:605px;top:852px;width:22px;height:2px;background:#fff"></div><div class="t" style="left:407.5px;width:100px;top:870.35px;font-size:11.4px;line-height:11.4px;color:#444;font-weight:400;text-align:center;">FORMATTING</div><div class="t" style="left:494.0px;width:100px;top:870.35px;font-size:11.4px;line-height:11.4px;color:#217346;font-weight:700;text-align:center;">CHARTS</div><div class="t" style="left:563.5px;width:100px;top:870.35px;font-size:11.4px;line-height:11.4px;color:#444;font-weight:400;text-align:center;">TOTALS</div><div class="t" style="left:630.0px;width:100px;top:870.35px;font-size:11.4px;line-height:11.4px;color:#444;font-weight:400;text-align:center;">TABLES</div><div class="t" style="left:710.5px;width:100px;top:870.35px;font-size:11.4px;line-height:11.4px;color:#444;font-weight:400;text-align:center;">SPARKLINES</div><div style="left:508px;top:865px;width:1px;height:22px;background:#e1e1e1"></div><div style="left:579px;top:865px;width:1px;height:22px;background:#e1e1e1"></div><div style="left:647px;top:865px;width:1px;height:22px;background:#e1e1e1"></div><div style="left:713px;top:865px;width:1px;height:22px;background:#e1e1e1"></div><div style="left:541px;top:901px;width:61px;height:75px;background:#cdeedb"></div><svg style="left:435px;top:909px;" width="29" height="28" viewBox="0 0 29 28"><path d="M0.5 0 V26.5 H28" fill="none" stroke="#777"/><path d="M0.5 18.7 L9.8 10 L18 15.5 L27.8 4.8" fill="none" stroke="#808080" stroke-width="1.1"/><path d="M0.5 23.5 L16.7 8.5 L27.8 18.8" fill="none" stroke="#a6a6a6" stroke-width="1.1"/></svg><div class="t" style="left:409.0px;width:80px;top:945.84px;font-size:12px;line-height:12px;color:#444;font-weight:400;text-align:center;">Line</div><svg style="left:496px;top:909px;" width="29" height="28" viewBox="0 0 29 28"><g stroke="#777"><rect x="4.5" y="11.5" width="4" height="15" fill="#fff"/><rect x="8.5" y="4.5" width="4" height="22" fill="#d9d9d9"/><rect x="16.5" y="6.5" width="4" height="20" fill="#fff"/><rect x="20.5" y="11.5" width="4" height="15" fill="#d9d9d9"/></g><path d="M0.5 0 V26.5 H28" fill="none" stroke="#777"/></svg><div class="t" style="left:470.0px;width:80px;top:945.84px;font-size:12px;line-height:12px;color:#444;font-weight:400;text-align:center;">Clustered</div><div class="t" style="left:470.0px;width:80px;top:961.84px;font-size:12px;line-height:12px;color:#444;font-weight:400;text-align:center;">Column</div><svg style="left:557px;top:909px;" width="29" height="28" viewBox="0 0 29 28"><g stroke="#777"><rect x="4.5" y="11.5" width="4" height="15" fill="#dff2e6"/><rect x="8.5" y="4.5" width="4" height="22" fill="#c8d8cc"/><rect x="16.5" y="6.5" width="4" height="20" fill="#dff2e6"/><rect x="20.5" y="11.5" width="4" height="15" fill="#c8d8cc"/></g><path d="M0.5 0 V26.5 H28" fill="none" stroke="#777"/></svg><div class="t" style="left:531.0px;width:80px;top:945.84px;font-size:12px;line-height:12px;color:#444;font-weight:400;text-align:center;">Clustered</div><div class="t" style="left:531.0px;width:80px;top:961.84px;font-size:12px;line-height:12px;color:#444;font-weight:400;text-align:center;">Column</div><svg style="left:618px;top:909px;" width="29" height="28" viewBox="0 0 29 28"><g stroke="#777"><rect x="0.5" y="3.5" width="15" height="4" fill="#fff"/><rect x="0.5" y="7.5" width="22" height="3.5" fill="#d9d9d9"/><rect x="0.5" y="15.5" width="20" height="4" fill="#fff"/><rect x="0.5" y="19.5" width="15" height="3.5" fill="#d9d9d9"/></g><path d="M0.5 0 V26.5 H28" fill="none" stroke="#777"/></svg><div class="t" style="left:592.0px;width:80px;top:945.84px;font-size:12px;line-height:12px;color:#444;font-weight:400;text-align:center;">Clustered</div><div class="t" style="left:592.0px;width:80px;top:961.84px;font-size:12px;line-height:12px;color:#444;font-weight:400;text-align:center;">Bar</div><svg style="left:679px;top:909px;" width="29" height="28" viewBox="0 0 29 28"><path d="M0.5 7.6 L7.4 13.2 L16.3 2.4 L23.3 8.5 H27.5 V23.5 L16.3 13.2 L7.4 21.6 L0.5 17.9 Z" fill="#d6d6d6" stroke="#777" stroke-width="1"/><path d="M0.5 0 V26.5 H27.5 V8.5" fill="none" stroke="#777"/></svg><div class="t" style="left:653.0px;width:80px;top:945.84px;font-size:12px;line-height:12px;color:#444;font-weight:400;text-align:center;">Stacked</div><div class="t" style="left:653.0px;width:80px;top:961.84px;font-size:12px;line-height:12px;color:#444;font-weight:400;text-align:center;">Area</div><svg style="left:739px;top:906px;" width="32" height="36" viewBox="0 0 32 36"><rect x="1" y="9" width="7" height="17" fill="#3d7fc0"/><rect x="9" y="1" width="7" height="25" fill="#eec060"/><rect x="17" y="6" width="7" height="20" fill="#777"/><path d="M20.5 20.5 Q20.5 17 25 17 Q29.5 17 29.5 21 Q29.5 23.5 26.5 25 Q25 26 25 28" fill="none" stroke="#fff" stroke-width="4.5"/><path d="M20.5 20.5 Q20.5 17 25 17 Q29.5 17 29.5 21 Q29.5 23.5 26.5 25 Q25 26 25 28" fill="none" stroke="#3d6a9a" stroke-width="2.6"/><circle cx="25" cy="31.5" r="1.8" fill="#3d6a9a"/></svg><div class="t" style="left:714.0px;width:80px;top:945.84px;font-size:12px;line-height:12px;color:#444;font-weight:400;text-align:center;">More</div><div class="t" style="left:714.0px;width:80px;top:961.84px;font-size:12px;line-height:12px;color:#444;font-weight:400;text-align:center;">Charts</div><div class="t" style="left:418.5px;top:995.43px;font-size:11.3px;line-height:11.3px;color:#666;font-weight:400;">Recommended Charts help you visualize data.</div>
</body></html>
